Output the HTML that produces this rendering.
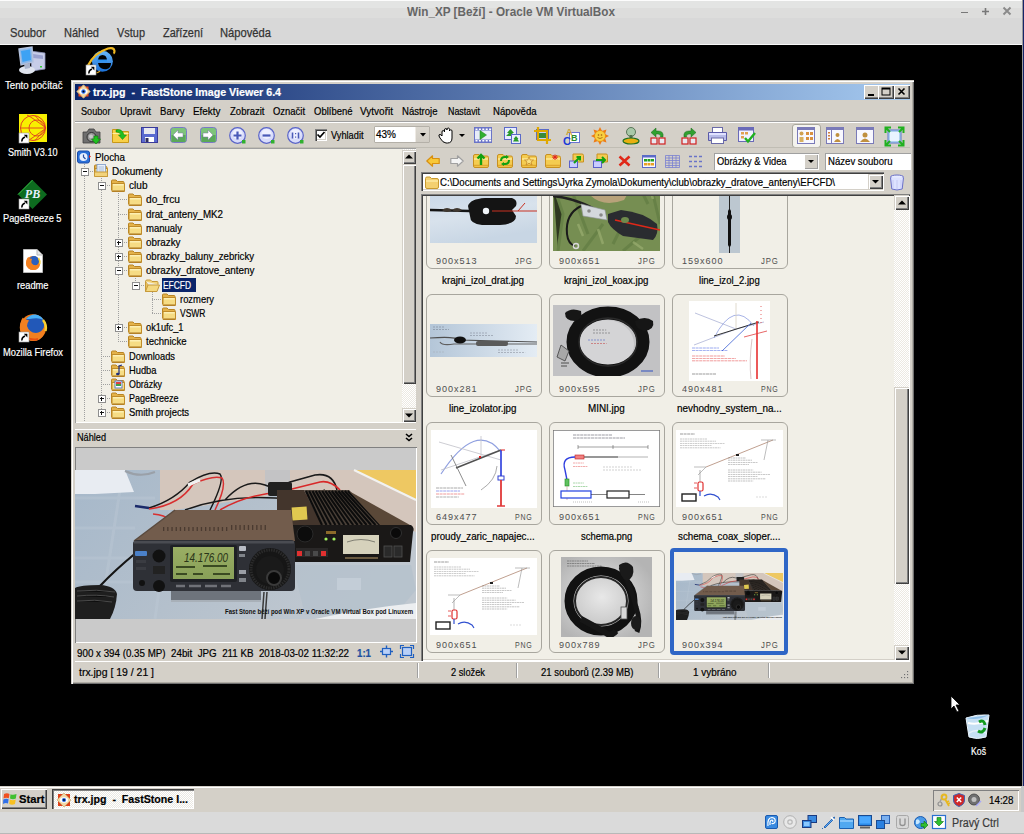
<!DOCTYPE html>
<html><head><meta charset="utf-8">
<style>
*{margin:0;padding:0;box-sizing:border-box}
html,body{width:1024px;height:834px;overflow:hidden;background:#000;font-family:"Liberation Sans",sans-serif;position:relative}
.a{position:absolute}
.t{position:absolute;white-space:nowrap;line-height:1;-webkit-text-stroke:0.2px currentColor}
.sx{transform-origin:0 50%}
svg{position:absolute;overflow:visible}
#vbtop{left:0;top:0;width:1024px;height:45px;background:linear-gradient(#fcfcfc 0,#fcfcfc 1px,#e3e4e3 1.5px,#e3e4e3 7.5px,#dddddc 8px,#dddddc 17.5px,#d8d8d8 18px,#d8d8d8 44px,#f8f8f8 44px)}
#vbtitle{left:0;width:1024px;top:5px;text-align:center;font-weight:bold;font-size:13px;color:#636363}
.vbm{top:27px;font-size:12.5px;color:#3a3a3a}
.desk{color:#fff;font-size:11px;text-shadow:1px 1px 0 #000}
.tbtn{position:absolute;width:16px;height:14px;background:#d4d0c8;box-shadow:inset 1px 1px 0 #fff,inset -1px -1px 0 #404040,inset -2px -2px 0 #808080}
.menu{top:104px;font-size:11px;color:#000}
.panel{background:#f1efe7}
.tree{font-size:11px;color:#000;top:0}
.card{position:absolute;width:116px;height:103px;border:1px solid #9e9c96;border-radius:7px}
.dim{position:absolute;font-size:10.5px;color:#555;letter-spacing:0.6px}
.fname{position:absolute;font-size:11px;color:#000}
.sbtn{position:absolute;background:#d4d0c8;box-shadow:inset 1px 1px 0 #d4d0c8,inset 2px 2px 0 #fff,inset -1px -1px 0 #404040,inset -2px -2px 0 #808080}
.track{position:absolute;background-color:#ece9e2;background-image:linear-gradient(45deg,#fff 25%,transparent 25%,transparent 75%,#fff 75%),linear-gradient(45deg,#fff 25%,transparent 25%,transparent 75%,#fff 75%);background-size:2px 2px;background-position:0 0,1px 1px;opacity:1}
.field{position:absolute;background:#fff;box-shadow:inset 1px 1px 0 #808080,inset 2px 2px 0 #404040,inset -1px -1px 0 #fff,inset -2px -2px 0 #d4d0c8}
</style></head><body>

<div id="vbtop" class="a"></div>
<div class="t sx" style="left:407.00px;top:5.20px;font-size:13px;color:#666;transform:scaleX(0.9021);-webkit-text-stroke:0;font-weight:bold;">Win_XP [Beží] - Oracle VM VirtualBox</div>
<div class="a" style="left:961px;top:11.5px;width:7px;height:1.7px;background:#787878"></div>
<svg style="left:982px;top:8px;" width="7" height="7" viewBox="0 0 7 7"><path d="M3.5 0V7M0 3.5H7" stroke="#787878" stroke-width="1.6"/></svg>
<svg style="left:1003px;top:7px;" width="8" height="8" viewBox="0 0 8 8"><path d="M0.5 0.5L7.5 7.5M7.5 0.5L0.5 7.5" stroke="#8a8a8a" stroke-width="1.9"/></svg>
<div class="a" style="left:1022px;top:0px;width:1px;height:834px;background:#9a9a9a"></div>
<div class="a" style="left:1023px;top:0px;width:1px;height:834px;background:#14246a"></div>
<div class="t sx" style="left:10.00px;top:26.92px;font-size:12.5px;color:#333;transform:scaleX(0.8932);-webkit-text-stroke:0.25px #333;">Soubor</div>
<div class="t sx" style="left:64.00px;top:26.92px;font-size:12.5px;color:#333;transform:scaleX(0.8836);-webkit-text-stroke:0.25px #333;">Náhled</div>
<div class="t sx" style="left:117.00px;top:26.92px;font-size:12.5px;color:#333;transform:scaleX(0.8760);-webkit-text-stroke:0.25px #333;">Vstup</div>
<div class="t sx" style="left:163.00px;top:26.92px;font-size:12.5px;color:#333;transform:scaleX(0.8725);-webkit-text-stroke:0.25px #333;">Zařízení</div>
<div class="t sx" style="left:220.00px;top:26.92px;font-size:12.5px;color:#333;transform:scaleX(0.8950);-webkit-text-stroke:0.25px #333;">Nápověda</div>
<svg style="left:18px;top:47px;" width="29" height="28" viewBox="0 0 29 28"><path d="M12 4L27 6L27 22L14 24Z" fill="#c7cde8" stroke="#8d93b8" stroke-width="0.8"/><path d="M15 7L25 8.5L25 12L15 11Z" fill="#9aa2cf"/><rect x="22" y="19" width="2" height="1.5" fill="#3c3"/><path d="M1 2L14 0L15 15L3 18Z" fill="#8ab6e8" stroke="#b4c2dc" stroke-width="1.4"/><path d="M3 4L12 2.5L13 13L4.5 15Z" fill="#3da2f4"/><ellipse cx="9" cy="23" rx="8" ry="4" fill="#dfe4ee"/><path d="M6 17L12 16L12 21L7 22Z" fill="#aab4cc"/></svg>
<div class="t sx" style="left:4.50px;top:80.19px;font-size:11px;color:#fff;transform:scaleX(0.8789);">Tento počítač</div>
<svg style="left:86px;top:47px;" width="30" height="28" viewBox="0 0 30 28"><defs><linearGradient id="ieg" x1="0" y1="0" x2="0" y2="1"><stop offset="0" stop-color="#6ab8f8"/><stop offset="1" stop-color="#1a70d8"/></linearGradient></defs><circle cx="16.4" cy="14.3" r="10.5" fill="url(#ieg)"/><path d="M12 14H21Q21 8 16.5 8Q12 8 12 14Z" fill="#000"/><path d="M12 16H25Q25 21 21 22Q16 23 13 19Z" fill="#000"/><path d="M11 13.5H21" stroke="#2a90f0" stroke-width="2"/><path d="M2 18.5Q8 6 22 1.5Q28 0 28.5 4Q28.5 6 27.5 6.5" fill="none" stroke="#f0b820" stroke-width="2.2"/><path d="M10.5 26Q13 25 14 24" stroke="#d8a020" stroke-width="1.2" fill="none"/></svg>
<svg style="left:86px;top:65px;" width="10" height="10" viewBox="0 0 10 10"><rect x="0" y="0" width="10" height="10" fill="#fff" stroke="#999" stroke-width="0.6"/><path d="M3 8.5Q2.5 5.5 6 4" fill="none" stroke="#000" stroke-width="1.6"/><path d="M4.8 1.8H8.4V5.4Z" fill="#000"/></svg>
<svg style="left:19px;top:114px;" width="28" height="28" viewBox="0 0 28 28"><rect x="0" y="0" width="28" height="28" fill="#f8f000"/><circle cx="14" cy="14" r="12.5" fill="none" stroke="#e04020" stroke-width="1"/><circle cx="18" cy="14" r="8" fill="none" stroke="#e04020" stroke-width="0.9"/><path d="M1.5 14H27M27 14Q14 4 8 1M27 14Q14 24 8 27M27 14Q20 6 16 1.5M27 14Q20 22 16 26.5" fill="none" stroke="#e04020" stroke-width="0.9"/></svg>
<svg style="left:19px;top:133px;" width="10" height="10" viewBox="0 0 10 10"><rect x="0" y="0" width="10" height="10" fill="#fff" stroke="#999" stroke-width="0.6"/><path d="M3 8.5Q2.5 5.5 6 4" fill="none" stroke="#000" stroke-width="1.6"/><path d="M4.8 1.8H8.4V5.4Z" fill="#000"/></svg>
<div class="t sx" style="left:8.00px;top:146.69px;font-size:11px;color:#fff;transform:scaleX(0.8261);">Smith V3.10</div>
<svg style="left:18px;top:180px;" width="29" height="29" viewBox="0 0 29 29"><path d="M14.5 0L29 14.5L14.5 29L0 14.5Z" fill="#0d6b1f"/><path d="M14.5 0L0 14.5" stroke="#3ad04a" stroke-width="1"/><text x="14.5" y="18" font-family="Liberation Serif" font-style="italic" font-weight="bold" font-size="12" fill="#e8f0ff" text-anchor="middle">PB</text></svg>
<svg style="left:19px;top:199px;" width="10" height="10" viewBox="0 0 10 10"><rect x="0" y="0" width="10" height="10" fill="#fff" stroke="#999" stroke-width="0.6"/><path d="M3 8.5Q2.5 5.5 6 4" fill="none" stroke="#000" stroke-width="1.6"/><path d="M4.8 1.8H8.4V5.4Z" fill="#000"/></svg>
<div class="t sx" style="left:3.00px;top:213.19px;font-size:11px;color:#fff;transform:scaleX(0.8392);">PageBreeze 5</div>
<svg style="left:23px;top:249px;" width="20" height="24" viewBox="0 0 20 24"><path d="M0.5 0.5H14L19.5 6V23.5H0.5Z" fill="#fff" stroke="#b8b8b8" stroke-width="1"/><path d="M14 0.5V6H19.5" fill="#e8e8e8" stroke="#b8b8b8"/><circle cx="10" cy="14" r="7" fill="#f07a1a"/><circle cx="11" cy="12" r="5" fill="#2a60c0"/><path d="M3 14Q3.5 9 5.5 8L6.5 10Q8 9 9 10Q8 12 8.5 14Q10 16.5 13 16.3Q15.5 16 16.5 13.5Q17.5 18.5 13.5 20.5Q9 22 5.5 19.5Q3 17 3 14Z" fill="#f28020"/><path d="M15.5 9Q17.5 12 16.8 15" stroke="#f8d030" stroke-width="1.5" fill="none"/></svg>
<div class="t sx" style="left:16.50px;top:280.19px;font-size:11px;color:#fff;transform:scaleX(0.8447);">readme</div>
<svg style="left:19px;top:314px;" width="28" height="28" viewBox="0 0 28 28"><circle cx="14" cy="13.5" r="13.2" fill="#f07a1a"/><circle cx="15.5" cy="10.5" r="9.8" fill="#2258b8"/><path d="M7 5Q11 0.5 16 0.5Q22 1 24.5 6Q20 3.5 14 4.5Q10 5 7 5Z" fill="#48b0f8"/><path d="M1 13Q1.5 6 4 3.5L5.5 6.5Q7.5 5 10 6.5Q8 9 8 12Q10 18.5 17 19Q22 18.5 25 14Q26.5 22 20.5 25.5Q14.5 28.5 8.5 25.5Q1 21 1 13Z" fill="#f28020"/><path d="M24 6Q28 11 26.5 17" stroke="#f8d030" stroke-width="2.5" fill="none"/><path d="M6 22Q12 27 19 25" stroke="#e85010" stroke-width="2" fill="none"/></svg>
<svg style="left:19px;top:332px;" width="10" height="10" viewBox="0 0 10 10"><rect x="0" y="0" width="10" height="10" fill="#fff" stroke="#999" stroke-width="0.6"/><path d="M3 8.5Q2.5 5.5 6 4" fill="none" stroke="#000" stroke-width="1.6"/><path d="M4.8 1.8H8.4V5.4Z" fill="#000"/></svg>
<div class="t sx" style="left:2.50px;top:346.69px;font-size:11px;color:#fff;transform:scaleX(0.8463);">Mozilla Firefox</div>
<svg style="left:965px;top:713px;" width="25" height="26" viewBox="0 0 25 26"><path d="M1 5Q12 1 24 2L21 24Q12 27 4 24Z" fill="#c6e0f4" stroke="#eaf4fc" stroke-width="1"/><path d="M1 5Q12 8 24 2Q13 4 1 5Z" fill="#8fc0ea"/><path d="M3 10Q12 12 23 8" stroke="#fff" stroke-width="2" fill="none"/><path d="M4 20Q12 15 21 20" stroke="#e4f0fa" stroke-width="1.5" fill="none"/><path d="M14 9Q19 6 20 12M13 18Q18 21 20 15" stroke="#129a20" stroke-width="3" fill="none"/></svg>
<div class="t sx" style="left:970.50px;top:745.69px;font-size:11px;color:#fff;transform:scaleX(0.7914);">Koš</div>
<svg style="left:950px;top:695px;" width="12" height="19" viewBox="0 0 12 19"><path d="M1 1V14L4 11L7 17L9 16L6 10H10Z" fill="#fff" stroke="#000" stroke-width="0.8"/></svg>
<div class="a" style="left:71px;top:80px;width:843px;height:604px;background:#d4d0c8;box-shadow:inset 1px 1px 0 #d4d0c8,inset 2px 2px 0 #fff,inset -1px -1px 0 #707070,inset -2px -2px 0 #b0aca4"></div>
<div class="a" style="left:75px;top:84px;width:835px;height:16px;background:linear-gradient(90deg,#0a246a,#a6caf0)"></div>
<svg style="left:76px;top:84px;" width="15" height="15" viewBox="0 0 15 15"><path d="M7.5 0.5L14.5 7.5L7.5 14.5L0.5 7.5Z" fill="#e8c890"/><rect x="2.5" y="2.5" width="10" height="10" fill="#f04818" transform="rotate(0)"/><path d="M7.5 1L14 7.5L7.5 14L1 7.5Z" fill="#f0d8a8" stroke="#c8a060" stroke-width="0.6"/><ellipse cx="7.5" cy="7.5" rx="4" ry="2.8" fill="#fff"/><circle cx="7.5" cy="7.5" r="2.2" fill="#2a6ae8"/><circle cx="7.5" cy="7.5" r="1" fill="#000"/></svg>
<div class="t sx" style="left:92.50px;top:86.69px;font-size:11px;color:#fff;transform:scaleX(0.9682);white-space:pre;font-weight:bold;">trx.jpg  -  FastStone Image Viewer 6.4</div>
<div class="tbtn" style="left:864px;top:85px"></div>
<div class="tbtn" style="left:878px;top:85px"></div>
<div class="tbtn" style="left:894px;top:85px"></div>
<div class="a" style="left:868px;top:94px;width:6px;height:2px;background:#000"></div>
<svg style="left:879px;top:86px;" width="14" height="12" viewBox="0 0 14 12"><rect x="3" y="2" width="8" height="7" fill="none" stroke="#000" stroke-width="1"/><rect x="3" y="2" width="8" height="1.5" fill="#000"/></svg>
<svg style="left:894px;top:85px;" width="16" height="14" viewBox="0 0 16 14"><path d="M4.5 3.5L10.5 9.5M10.5 3.5L4.5 9.5" stroke="#000" stroke-width="1.6"/></svg>
<div class="t sx" style="left:80.50px;top:106.19px;font-size:11px;color:#000;transform:scaleX(0.8317);">Soubor</div>
<div class="t sx" style="left:119.50px;top:106.19px;font-size:11px;color:#000;transform:scaleX(0.8898);">Upravit</div>
<div class="t sx" style="left:159.50px;top:106.19px;font-size:11px;color:#000;transform:scaleX(0.8714);">Barvy</div>
<div class="t sx" style="left:193.00px;top:106.19px;font-size:11px;color:#000;transform:scaleX(0.8997);">Efekty</div>
<div class="t sx" style="left:229.50px;top:106.19px;font-size:11px;color:#000;transform:scaleX(0.8683);">Zobrazit</div>
<div class="t sx" style="left:273.00px;top:106.19px;font-size:11px;color:#000;transform:scaleX(0.8581);">Označit</div>
<div class="t sx" style="left:313.50px;top:106.19px;font-size:11px;color:#000;transform:scaleX(0.8624);">Oblíbené</div>
<div class="t sx" style="left:359.50px;top:106.19px;font-size:11px;color:#000;transform:scaleX(0.9100);">Vytvořit</div>
<div class="t sx" style="left:402.00px;top:106.19px;font-size:11px;color:#000;transform:scaleX(0.8667);">Nástroje</div>
<div class="t sx" style="left:448.00px;top:106.19px;font-size:11px;color:#000;transform:scaleX(0.8054);">Nastavit</div>
<div class="t sx" style="left:492.50px;top:106.19px;font-size:11px;color:#000;transform:scaleX(0.8675);">Nápověda</div>
<div class="a" style="left:75px;top:121px;width:835px;height:1px;background:#a0a0a0"></div>
<div class="a" style="left:75px;top:122px;width:835px;height:1px;background:#fff"></div>
<svg style="left:81.5px;top:126.5px;" width="19" height="18" viewBox="0 0 19 18"><path d="M1 5H5L7 2H12L14 5H18V16H1Z" fill="#6e6e6e" stroke="#404040" stroke-width="0.8"/><circle cx="9.5" cy="10" r="4.5" fill="#9a9a9a" stroke="#303030" stroke-width="1"/><circle cx="9" cy="9.5" r="2" fill="#c8c8c8"/><path d="M12 9H16V12H18.5L14 17L9.5 12H12Z" fill="#20c020" stroke="#0a7a0a" stroke-width="0.6"/></svg>
<svg style="left:111.5px;top:127px;" width="17" height="16" viewBox="0 0 17 16"><path d="M0.5 2.5H6L7.5 4.5H16.5V15.5H0.5Z" fill="#f8d048" stroke="#c89818" stroke-width="1"/><path d="M0.5 6.5H16.5" stroke="#fff0a0"/><path d="M4 3Q10 1 12 8H14.5L10.5 12.5L6.5 8H9Q8 5 4 5Z" fill="#20c020" stroke="#0a800a" stroke-width="0.5"/></svg>
<svg style="left:140.5px;top:127px;" width="17" height="16" viewBox="0 0 17 16"><rect x="0.5" y="0.5" width="16" height="15" fill="#5a6ad0" stroke="#3a3a9a"/><rect x="3" y="1" width="11" height="6" fill="#e8e8f0"/><rect x="4" y="10" width="9" height="5" fill="#fff"/><rect x="4.5" y="11" width="3" height="4" fill="#303060"/></svg>
<svg style="left:170px;top:127px;" width="17" height="16" viewBox="0 0 17 16"><rect x="0.5" y="0.5" width="16" height="15" rx="3" fill="#7ec47a" stroke="#7a78c8"/><rect x="1.5" y="8" width="14" height="7" fill="#5aa85a"/><path d="M3 8L8 3V6H13V10H8V13Z" fill="#fff" stroke="#7a7aa0" stroke-width="0.5"/></svg>
<svg style="left:199.5px;top:127px;" width="17" height="16" viewBox="0 0 17 16"><rect x="0.5" y="0.5" width="16" height="15" rx="3" fill="#7ec47a" stroke="#7a78c8"/><rect x="1.5" y="8" width="14" height="7" fill="#5aa85a"/><path d="M13 8L8 3V6H3V10H8V13Z" fill="#fff" stroke="#7a7aa0" stroke-width="0.5"/></svg>
<svg style="left:228.5px;top:126.5px;" width="17" height="17" viewBox="0 0 17 17"><circle cx="8.5" cy="8.5" r="7.8" fill="#d8dcfa" stroke="#5a64c8" stroke-width="1.2"/><circle cx="8.5" cy="7" r="5" fill="#eef0ff"/><path d="M8.5 4.5V12.5M4.5 8.5H12.5" stroke="#4a5ab8" stroke-width="2.2"/><rect x="13" y="13" width="3.5" height="3.5" fill="#30b030"/></svg>
<svg style="left:258px;top:126.5px;" width="17" height="17" viewBox="0 0 17 17"><circle cx="8.5" cy="8.5" r="7.8" fill="#d8dcfa" stroke="#5a64c8" stroke-width="1.2"/><circle cx="8.5" cy="7" r="5" fill="#eef0ff"/><path d="M4.5 8.5H12.5" stroke="#4a5ab8" stroke-width="2.2"/><rect x="13" y="13" width="3.5" height="3.5" fill="#30b030"/></svg>
<svg style="left:287px;top:126.5px;" width="17" height="17" viewBox="0 0 17 17"><circle cx="8.5" cy="8.5" r="7.8" fill="#d8dcfa" stroke="#5a64c8" stroke-width="1.2"/><circle cx="8.5" cy="7" r="5" fill="#eef0ff"/><path d="M5.5 5.5V11.5M11.5 5.5V11.5" stroke="#4a5ab8" stroke-width="1.6"/><rect x="8" y="6" width="1.2" height="1.2" fill="#4a5ab8"/><rect x="8" y="9.5" width="1.2" height="1.2" fill="#4a5ab8"/><rect x="13" y="13" width="3.5" height="3.5" fill="#30b030"/></svg>
<div class="a" style="left:315px;top:129px;width:12px;height:12px;background:#fff;box-shadow:inset 1px 1px 0 #808080,inset 2px 2px 0 #404040,inset -1px -1px 0 #fff,inset -2px -2px 0 #d4d0c8"></div>
<svg style="left:317px;top:131px;" width="8" height="8" viewBox="0 0 8 8"><path d="M0.5 3.5L3 6L7.5 1" fill="none" stroke="#000" stroke-width="1.7"/></svg>
<div class="t sx" style="left:331.00px;top:129.69px;font-size:11px;color:#000;transform:scaleX(0.8392);">Vyhladit</div>
<div class="a" style="left:374px;top:126px;width:56px;height:17px;background:#fff;border:1px solid #b4b0a8;border-radius:1px"></div>
<div class="a" style="left:415px;top:127px;width:14px;height:15px;background:linear-gradient(#dcd8d0,#d0ccc4);border-left:1px solid #eeeae4"></div>
<div class="t sx" style="left:376.00px;top:128.69px;font-size:11px;color:#000;transform:scaleX(0.9085);">43%</div>
<svg style="left:419.5px;top:133px;" width="6" height="3.5" viewBox="0 0 6 3.5"><path d="M0 0H6L3 3.5Z" fill="#000"/></svg>
<svg style="left:438px;top:127px;" width="18" height="17" viewBox="0 0 18 17"><path d="M4 9V5Q4 3.5 5.3 3.5Q6.5 3.5 6.5 5V3Q6.5 1.5 7.8 1.5Q9 1.5 9 3V2.5Q9 1 10.3 1Q11.5 1 11.5 2.5V4Q11.5 2.8 12.7 2.8Q14 2.8 14 4V11Q14 16 9.5 16H8Q5 16 2 11L1 9Q0.5 7.5 2 7.5Q3 7.5 4 9Z" fill="#fff" stroke="#000" stroke-width="1"/></svg>
<svg style="left:459px;top:134px;" width="6" height="3" viewBox="0 0 6 3"><path d="M0 0H6L3 3Z" fill="#000"/></svg>
<svg style="left:474px;top:127px;" width="18" height="16" viewBox="0 0 18 16"><rect x="0.5" y="0.5" width="17" height="15" fill="#e8ecf8" stroke="#6a74c8"/><rect x="1" y="1" width="16" height="2.5" fill="#6a74c8"/><rect x="1" y="12.5" width="16" height="2.5" fill="#6a74c8"/><rect x="1.5" y="1.5" width="2" height="1.5" fill="#fff"/><rect x="1.5" y="13" width="2" height="1.5" fill="#fff"/><rect x="4.9" y="1.5" width="2" height="1.5" fill="#fff"/><rect x="4.9" y="13" width="2" height="1.5" fill="#fff"/><rect x="8.3" y="1.5" width="2" height="1.5" fill="#fff"/><rect x="8.3" y="13" width="2" height="1.5" fill="#fff"/><rect x="11.7" y="1.5" width="2" height="1.5" fill="#fff"/><rect x="11.7" y="13" width="2" height="1.5" fill="#fff"/><rect x="15.1" y="1.5" width="2" height="1.5" fill="#fff"/><rect x="15.1" y="13" width="2" height="1.5" fill="#fff"/><path d="M6 3.5L12.5 8L6 12.5Z" fill="#30b030" stroke="#208020" stroke-width="0.5"/></svg>
<svg style="left:504px;top:127px;" width="17" height="17" viewBox="0 0 17 17"><rect x="0.5" y="0.5" width="12" height="12" fill="#e8ecff" stroke="#5a6ac8"/><path d="M6.5 2L10 6H8L11 9H2L5 6H3Z" fill="#2a9a2a"/><rect x="7.5" y="7.5" width="9" height="9" fill="#e8ecff" stroke="#5a6ac8"/><path d="M12 9L14.5 12H13.5L15 14.5H9L10.5 12H9.5Z" fill="#2a9a2a"/></svg>
<svg style="left:533.5px;top:127px;" width="17" height="17" viewBox="0 0 17 17"><rect x="2.5" y="2.5" width="12" height="10" fill="#c8d0f8" stroke="#5a6ac8"/><path d="M4 0V13H17M0 4H13V17" fill="none" stroke="#e0a800" stroke-width="2.2"/><rect x="5" y="6" width="7" height="5" fill="#3a8a3a"/></svg>
<svg style="left:563px;top:126.5px;" width="17" height="18" viewBox="0 0 17 18"><rect x="6.5" y="5.5" width="10" height="10" fill="#fff" stroke="#6a74d0"/><text x="3" y="8" font-family="Liberation Sans" font-weight="bold" font-size="9" fill="#c8a030">A</text><text x="0" y="17.5" font-family="Liberation Sans" font-weight="bold" font-size="11" fill="#1a3ad8">C</text><text x="8" y="14" font-family="Liberation Sans" font-weight="bold" font-size="9" fill="#2a8a2a">B</text></svg>
<svg style="left:591px;top:126.5px;" width="18" height="18" viewBox="0 0 18 18"><path d="M9 0L11 4L15.5 2.5L14 7L18 9L14 11L15.5 15.5L11 14L9 18L7 14L2.5 15.5L4 11L0 9L4 7L2.5 2.5L7 4Z" fill="#f07a10"/><circle cx="9" cy="9" r="5.5" fill="#f8d040" stroke="#e08010" stroke-width="0.6"/><circle cx="7.5" cy="8" r="0.8" fill="#a06010"/><circle cx="10.5" cy="8" r="0.8" fill="#a06010"/><path d="M6.5 10.5Q9 12.5 11.5 10.5" stroke="#a06010" stroke-width="0.8" fill="none"/></svg>
<svg style="left:621.5px;top:126.5px;" width="18" height="18" viewBox="0 0 18 18"><circle cx="9" cy="5" r="4.5" fill="#a8c8a8" stroke="#406040" stroke-width="0.8"/><rect x="7.5" y="8" width="3" height="4" fill="#507050"/><ellipse cx="9" cy="14" rx="8" ry="3" fill="#e8b010" stroke="#207020" stroke-width="1.2"/></svg>
<svg style="left:649.5px;top:126.5px;" width="18" height="18" viewBox="0 0 18 18"><path d="M13 10Q14 4 8 4H6V1L1 5.5L6 10V7H8Q11 7 10.5 10Z" fill="#30a030" stroke="#1a6a1a" stroke-width="0.5"/><rect x="1" y="11" width="6" height="6" fill="#e8e8f0" stroke="#d02020" stroke-width="1.2"/><rect x="9" y="11" width="6" height="6" fill="#e8e8f0" stroke="#d02020" stroke-width="1.2"/></svg>
<svg style="left:679px;top:126.5px;" width="18" height="18" viewBox="0 0 18 18"><path d="M5 10Q4 4 10 4H12V1L17 5.5L12 10V7H10Q7 7 7.5 10Z" fill="#30a030" stroke="#1a6a1a" stroke-width="0.5"/><rect x="3" y="11" width="6" height="6" fill="#e8e8f0" stroke="#d02020" stroke-width="1.2"/><rect x="11" y="11" width="6" height="6" fill="#e8e8f0" stroke="#d02020" stroke-width="1.2"/></svg>
<svg style="left:708px;top:127px;" width="19" height="17" viewBox="0 0 19 17"><rect x="4.5" y="0.5" width="10" height="6" fill="#fff" stroke="#6a6aa8"/><path d="M0.5 5.5H18.5V13.5H0.5Z" fill="#b8bce8" stroke="#5a5aa8"/><rect x="1" y="6" width="17" height="2" fill="#e0e2ff"/><rect x="3.5" y="11" width="12" height="5.5" fill="#fff" stroke="#6a6aa8"/></svg>
<svg style="left:737.5px;top:127px;" width="18" height="17" viewBox="0 0 18 17"><rect x="0.5" y="0.5" width="15" height="14" fill="#f0f0ff" stroke="#6a6ab8"/><rect x="0.5" y="0.5" width="15" height="3" fill="#6a6ab8"/><rect x="3" y="5" width="3" height="2.5" fill="#e0a050"/><rect x="7" y="5" width="3" height="2.5" fill="#e0a050"/><rect x="3" y="9" width="3" height="2.5" fill="#e0a050"/><path d="M7 11L10 14.5L17 6" fill="none" stroke="#20b020" stroke-width="2.4"/></svg>
<div class="a" style="left:791.5px;top:123.5px;width:29px;height:24px;background:#f4f3ee;border:1px solid #a8a69c;border-radius:3px"></div>
<svg style="left:797px;top:127px;" width="18" height="17" viewBox="0 0 18 17"><rect x="0.5" y="0.5" width="17" height="16" fill="#f8f8ff" stroke="#7a7ab8"/><rect x="0.5" y="0.5" width="17" height="2.5" fill="#7a7ab8"/><circle cx="4.5" cy="6.5" r="2" fill="#d0a050"/><rect x="2.5" y="10" width="4" height="5" fill="#d8b060"/><rect x="9" y="5" width="3" height="3" fill="#d89040"/><rect x="13" y="5" width="3" height="3" fill="#d89040"/><rect x="9" y="10" width="3" height="3" fill="#d89040"/><rect x="13" y="10" width="3" height="3" fill="#d89040"/></svg>
<svg style="left:826px;top:127px;" width="18" height="17" viewBox="0 0 18 17"><rect x="0.5" y="0.5" width="17" height="16" fill="#f8f8ff" stroke="#7a7ab8"/><rect x="0.5" y="0.5" width="17" height="2.5" fill="#7a7ab8"/><path d="M5.5 3V16.5" stroke="#7a7ab8"/><rect x="2" y="5" width="2" height="1.5" fill="#d08040"/><rect x="2" y="8" width="2" height="1.5" fill="#d08040"/><rect x="2" y="11" width="2" height="1.5" fill="#d08040"/><circle cx="11.5" cy="8" r="2" fill="#c09040"/><path d="M8 15Q11.5 9 15 15Z" fill="#c09040"/></svg>
<svg style="left:855.5px;top:127px;" width="18" height="17" viewBox="0 0 18 17"><rect x="0.5" y="0.5" width="17" height="16" fill="#f8f8ff" stroke="#7a7ab8"/><rect x="0.5" y="0.5" width="17" height="2.5" fill="#7a7ab8"/><circle cx="9" cy="8" r="2.5" fill="#c09040"/><path d="M4 15Q9 8 14 15Z" fill="#c09040"/></svg>
<svg style="left:884.5px;top:126.5px;" width="19" height="19" viewBox="0 0 19 19"><rect x="3" y="3" width="13" height="13" fill="#b0d0f0" stroke="#5a7ac8"/><rect x="5" y="5" width="9" height="9" fill="#e8f4ff"/><path d="M0.5 6V0.5H6M13 0.5H18.5V6M18.5 13V18.5H13M6 18.5H0.5V13M1 1L5 5M18 1L14 5M18 18L14 14M1 18L5 14" fill="none" stroke="#20b020" stroke-width="2"/></svg>
<div class="a" style="left:75px;top:147px;width:835px;height:1px;background:#c0bdb4"></div>
<div class="a" style="left:75px;top:148px;width:341px;height:275px;background:#f1efe7;box-shadow:inset 1px 1px 0 #a0a0a0,inset -1px -1px 0 #fff"></div>
<div class="a" style="left:76px;top:149px;width:325px;height:273px;overflow:hidden">
<div class="a" style="left:8px;top:15px;width:1px;height:259px;background-image:linear-gradient(#a0a0a0 50%,transparent 50%);background-size:1px 2px"></div>
<div class="a" style="left:25px;top:27px;width:1px;height:236px;background-image:linear-gradient(#a0a0a0 50%,transparent 50%);background-size:1px 2px"></div>
<div class="a" style="left:42px;top:42px;width:1px;height:151px;background-image:linear-gradient(#a0a0a0 50%,transparent 50%);background-size:1px 2px"></div>
<div class="a" style="left:59px;top:127px;width:1px;height:9px;background-image:linear-gradient(#a0a0a0 50%,transparent 50%);background-size:1px 2px"></div>
<div class="a" style="left:76px;top:141px;width:1px;height:23px;background-image:linear-gradient(#a0a0a0 50%,transparent 50%);background-size:1px 2px"></div>
<div class="a" style="left:8px;top:22px;width:10px;height:1px;background-image:linear-gradient(90deg,#a0a0a0 50%,transparent 50%);background-size:2px 1px"></div>
<div class="a" style="left:5px;top:19px;width:8px;height:8px;background:#fff;border:1px solid #8e8e8e"></div>
<div class="a" style="left:7px;top:22px;width:4px;height:1px;background:#111"></div>
<div class="a" style="left:25px;top:36px;width:10px;height:1px;background-image:linear-gradient(90deg,#a0a0a0 50%,transparent 50%);background-size:2px 1px"></div>
<div class="a" style="left:22px;top:33px;width:8px;height:8px;background:#fff;border:1px solid #8e8e8e"></div>
<div class="a" style="left:24px;top:36px;width:4px;height:1px;background:#111"></div>
<div class="a" style="left:42px;top:50px;width:10px;height:1px;background-image:linear-gradient(90deg,#a0a0a0 50%,transparent 50%);background-size:2px 1px"></div>
<div class="a" style="left:42px;top:65px;width:10px;height:1px;background-image:linear-gradient(90deg,#a0a0a0 50%,transparent 50%);background-size:2px 1px"></div>
<div class="a" style="left:42px;top:79px;width:10px;height:1px;background-image:linear-gradient(90deg,#a0a0a0 50%,transparent 50%);background-size:2px 1px"></div>
<div class="a" style="left:42px;top:93px;width:10px;height:1px;background-image:linear-gradient(90deg,#a0a0a0 50%,transparent 50%);background-size:2px 1px"></div>
<div class="a" style="left:39px;top:90px;width:8px;height:8px;background:#fff;border:1px solid #8e8e8e"></div>
<div class="a" style="left:41px;top:93px;width:4px;height:1px;background:#111"></div>
<div class="a" style="left:42px;top:92px;width:1px;height:4px;background:#111"></div>
<div class="a" style="left:42px;top:107px;width:10px;height:1px;background-image:linear-gradient(90deg,#a0a0a0 50%,transparent 50%);background-size:2px 1px"></div>
<div class="a" style="left:39px;top:104px;width:8px;height:8px;background:#fff;border:1px solid #8e8e8e"></div>
<div class="a" style="left:41px;top:107px;width:4px;height:1px;background:#111"></div>
<div class="a" style="left:42px;top:106px;width:1px;height:4px;background:#111"></div>
<div class="a" style="left:42px;top:121px;width:10px;height:1px;background-image:linear-gradient(90deg,#a0a0a0 50%,transparent 50%);background-size:2px 1px"></div>
<div class="a" style="left:39px;top:118px;width:8px;height:8px;background:#fff;border:1px solid #8e8e8e"></div>
<div class="a" style="left:41px;top:121px;width:4px;height:1px;background:#111"></div>
<div class="a" style="left:59px;top:136px;width:10px;height:1px;background-image:linear-gradient(90deg,#a0a0a0 50%,transparent 50%);background-size:2px 1px"></div>
<div class="a" style="left:56px;top:133px;width:8px;height:8px;background:#fff;border:1px solid #8e8e8e"></div>
<div class="a" style="left:58px;top:136px;width:4px;height:1px;background:#111"></div>
<div class="a" style="left:76px;top:150px;width:10px;height:1px;background-image:linear-gradient(90deg,#a0a0a0 50%,transparent 50%);background-size:2px 1px"></div>
<div class="a" style="left:76px;top:164px;width:10px;height:1px;background-image:linear-gradient(90deg,#a0a0a0 50%,transparent 50%);background-size:2px 1px"></div>
<div class="a" style="left:42px;top:178px;width:10px;height:1px;background-image:linear-gradient(90deg,#a0a0a0 50%,transparent 50%);background-size:2px 1px"></div>
<div class="a" style="left:39px;top:175px;width:8px;height:8px;background:#fff;border:1px solid #8e8e8e"></div>
<div class="a" style="left:41px;top:178px;width:4px;height:1px;background:#111"></div>
<div class="a" style="left:42px;top:177px;width:1px;height:4px;background:#111"></div>
<div class="a" style="left:42px;top:192px;width:10px;height:1px;background-image:linear-gradient(90deg,#a0a0a0 50%,transparent 50%);background-size:2px 1px"></div>
<div class="a" style="left:25px;top:207px;width:10px;height:1px;background-image:linear-gradient(90deg,#a0a0a0 50%,transparent 50%);background-size:2px 1px"></div>
<div class="a" style="left:25px;top:221px;width:10px;height:1px;background-image:linear-gradient(90deg,#a0a0a0 50%,transparent 50%);background-size:2px 1px"></div>
<div class="a" style="left:25px;top:235px;width:10px;height:1px;background-image:linear-gradient(90deg,#a0a0a0 50%,transparent 50%);background-size:2px 1px"></div>
<div class="a" style="left:25px;top:249px;width:10px;height:1px;background-image:linear-gradient(90deg,#a0a0a0 50%,transparent 50%);background-size:2px 1px"></div>
<div class="a" style="left:22px;top:246px;width:8px;height:8px;background:#fff;border:1px solid #8e8e8e"></div>
<div class="a" style="left:24px;top:249px;width:4px;height:1px;background:#111"></div>
<div class="a" style="left:25px;top:248px;width:1px;height:4px;background:#111"></div>
<div class="a" style="left:25px;top:263px;width:10px;height:1px;background-image:linear-gradient(90deg,#a0a0a0 50%,transparent 50%);background-size:2px 1px"></div>
<div class="a" style="left:22px;top:260px;width:8px;height:8px;background:#fff;border:1px solid #8e8e8e"></div>
<div class="a" style="left:24px;top:263px;width:4px;height:1px;background:#111"></div>
<div class="a" style="left:25px;top:262px;width:1px;height:4px;background:#111"></div>
</div>
<svg style="left:77px;top:150.2px;" width="14" height="14" viewBox="0 0 14 14"><rect x="0.5" y="1" width="12" height="12" rx="2" fill="#2a70d8" stroke="#1a4aa8"/><circle cx="6.5" cy="7" r="4" fill="#e8f0ff"/><path d="M6.5 4.5V7L8.5 9" stroke="#2a50a0" stroke-width="1.2" fill="none"/><path d="M12 5L14 6.5L12 8Z" fill="#e02020"/></svg>
<div class="t sx" style="left:95.00px;top:151.89px;font-size:11px;color:#000;transform:scaleX(0.8920);">Plocha</div>
<svg style="left:94px;top:164.39999999999998px;" width="14" height="14" viewBox="0 0 14 14"><path d="M0.5 2Q0.5 1 1.5 1H5L6.5 2.5H12Q13 2.5 13 3.5V11H0.5Z" fill="#e4b24a" stroke="#b88424" stroke-width="1"/><path d="M1 4.5H13.5V12.5H1Z" fill="#f6dc84" stroke="#c08c2a" stroke-width="1"/><path d="M2 5.8H12.5" stroke="#fff4c0" stroke-width="1.2"/><path d="M1.5 12H13" stroke="#a87420" stroke-width="1"/><rect x="3" y="0.5" width="8.5" height="9" fill="#e8f0fa" stroke="#7a9ac8" stroke-width="0.8"/><path d="M4.5 3H10M4.5 5H10M4.5 7H10" stroke="#7a9ac8" stroke-width="0.6"/><path d="M0.5 8H13.5V12.5H0.5Z" fill="#f2d37a" stroke="#c79a3a"/></svg>
<div class="t sx" style="left:112.00px;top:166.09px;font-size:11px;color:#000;transform:scaleX(0.9078);">Dokumenty</div>
<svg style="left:111px;top:179.1px;" width="14" height="13" viewBox="0 0 14 13"><path d="M0.5 2Q0.5 1 1.5 1H5L6.5 2.5H12Q13 2.5 13 3.5V11H0.5Z" fill="#e4b24a" stroke="#b88424" stroke-width="1"/><path d="M1 4.5H13.5V12.5H1Z" fill="#f6dc84" stroke="#c08c2a" stroke-width="1"/><path d="M2 5.8H12.5" stroke="#fff4c0" stroke-width="1.2"/><path d="M1.5 12H13" stroke="#a87420" stroke-width="1"/></svg>
<div class="t sx" style="left:129.00px;top:180.29px;font-size:11px;color:#000;transform:scaleX(0.9168);">club</div>
<svg style="left:128px;top:193.29999999999998px;" width="14" height="13" viewBox="0 0 14 13"><path d="M0.5 2Q0.5 1 1.5 1H5L6.5 2.5H12Q13 2.5 13 3.5V11H0.5Z" fill="#e4b24a" stroke="#b88424" stroke-width="1"/><path d="M1 4.5H13.5V12.5H1Z" fill="#f6dc84" stroke="#c08c2a" stroke-width="1"/><path d="M2 5.8H12.5" stroke="#fff4c0" stroke-width="1.2"/><path d="M1.5 12H13" stroke="#a87420" stroke-width="1"/></svg>
<div class="t sx" style="left:146.00px;top:194.49px;font-size:11px;color:#000;transform:scaleX(0.9268);">do_frcu</div>
<svg style="left:128px;top:207.5px;" width="14" height="13" viewBox="0 0 14 13"><path d="M0.5 2Q0.5 1 1.5 1H5L6.5 2.5H12Q13 2.5 13 3.5V11H0.5Z" fill="#e4b24a" stroke="#b88424" stroke-width="1"/><path d="M1 4.5H13.5V12.5H1Z" fill="#f6dc84" stroke="#c08c2a" stroke-width="1"/><path d="M2 5.8H12.5" stroke="#fff4c0" stroke-width="1.2"/><path d="M1.5 12H13" stroke="#a87420" stroke-width="1"/></svg>
<div class="t sx" style="left:146.00px;top:208.69px;font-size:11px;color:#000;transform:scaleX(0.8868);">drat_anteny_MK2</div>
<svg style="left:128px;top:221.7px;" width="14" height="13" viewBox="0 0 14 13"><path d="M0.5 2Q0.5 1 1.5 1H5L6.5 2.5H12Q13 2.5 13 3.5V11H0.5Z" fill="#e4b24a" stroke="#b88424" stroke-width="1"/><path d="M1 4.5H13.5V12.5H1Z" fill="#f6dc84" stroke="#c08c2a" stroke-width="1"/><path d="M2 5.8H12.5" stroke="#fff4c0" stroke-width="1.2"/><path d="M1.5 12H13" stroke="#a87420" stroke-width="1"/></svg>
<div class="t sx" style="left:146.00px;top:222.89px;font-size:11px;color:#000;transform:scaleX(0.8659);">manualy</div>
<svg style="left:128px;top:235.89999999999998px;" width="14" height="13" viewBox="0 0 14 13"><path d="M0.5 2Q0.5 1 1.5 1H5L6.5 2.5H12Q13 2.5 13 3.5V11H0.5Z" fill="#e4b24a" stroke="#b88424" stroke-width="1"/><path d="M1 4.5H13.5V12.5H1Z" fill="#f6dc84" stroke="#c08c2a" stroke-width="1"/><path d="M2 5.8H12.5" stroke="#fff4c0" stroke-width="1.2"/><path d="M1.5 12H13" stroke="#a87420" stroke-width="1"/></svg>
<div class="t sx" style="left:146.00px;top:237.09px;font-size:11px;color:#000;transform:scaleX(0.8958);">obrazky</div>
<svg style="left:128px;top:250.09999999999997px;" width="14" height="13" viewBox="0 0 14 13"><path d="M0.5 2Q0.5 1 1.5 1H5L6.5 2.5H12Q13 2.5 13 3.5V11H0.5Z" fill="#e4b24a" stroke="#b88424" stroke-width="1"/><path d="M1 4.5H13.5V12.5H1Z" fill="#f6dc84" stroke="#c08c2a" stroke-width="1"/><path d="M2 5.8H12.5" stroke="#fff4c0" stroke-width="1.2"/><path d="M1.5 12H13" stroke="#a87420" stroke-width="1"/></svg>
<div class="t sx" style="left:146.00px;top:251.29px;font-size:11px;color:#000;transform:scaleX(0.8745);">obrazky_baluny_zebricky</div>
<svg style="left:128px;top:264.29999999999995px;" width="14" height="13" viewBox="0 0 14 13"><path d="M0.5 2Q0.5 1 1.5 1H5L6.5 2.5H12Q13 2.5 13 3.5V11H0.5Z" fill="#e4b24a" stroke="#b88424" stroke-width="1"/><path d="M1 4.5H13.5V12.5H1Z" fill="#f6dc84" stroke="#c08c2a" stroke-width="1"/><path d="M2 5.8H12.5" stroke="#fff4c0" stroke-width="1.2"/><path d="M1.5 12H13" stroke="#a87420" stroke-width="1"/></svg>
<div class="t sx" style="left:146.00px;top:265.49px;font-size:11px;color:#000;transform:scaleX(0.9007);">obrazky_dratove_anteny</div>
<svg style="left:145px;top:278.5px;" width="15" height="14" viewBox="0 0 15 14"><path d="M0.5 2.5Q0.5 1 2 1H5.5L7 2.5H12Q13 2.5 13 3.5V5.5" fill="#f2d37a" stroke="#c79a3a" stroke-width="1"/><path d="M0.5 2.5V12.5H12L14.5 6H3Z" fill="#f4d880" stroke="#c79a3a" stroke-width="1"/><path d="M0.5 2.5V12.5L3 6" fill="#e8c060" stroke="#c79a3a"/></svg>
<div class="a" style="left:162px;top:278px;width:34px;height:14px;background:#0a246a"></div>
<div class="t sx" style="left:163.00px;top:279.69px;font-size:11px;color:#fff;transform:scaleX(0.7637);">EFCFD</div>
<svg style="left:162px;top:292.7px;" width="14" height="13" viewBox="0 0 14 13"><path d="M0.5 2Q0.5 1 1.5 1H5L6.5 2.5H12Q13 2.5 13 3.5V11H0.5Z" fill="#e4b24a" stroke="#b88424" stroke-width="1"/><path d="M1 4.5H13.5V12.5H1Z" fill="#f6dc84" stroke="#c08c2a" stroke-width="1"/><path d="M2 5.8H12.5" stroke="#fff4c0" stroke-width="1.2"/><path d="M1.5 12H13" stroke="#a87420" stroke-width="1"/></svg>
<div class="t sx" style="left:180.00px;top:293.89px;font-size:11px;color:#000;transform:scaleX(0.8559);">rozmery</div>
<svg style="left:162px;top:306.9px;" width="14" height="13" viewBox="0 0 14 13"><path d="M0.5 2Q0.5 1 1.5 1H5L6.5 2.5H12Q13 2.5 13 3.5V11H0.5Z" fill="#e4b24a" stroke="#b88424" stroke-width="1"/><path d="M1 4.5H13.5V12.5H1Z" fill="#f6dc84" stroke="#c08c2a" stroke-width="1"/><path d="M2 5.8H12.5" stroke="#fff4c0" stroke-width="1.2"/><path d="M1.5 12H13" stroke="#a87420" stroke-width="1"/></svg>
<div class="t sx" style="left:180.00px;top:308.09px;font-size:11px;color:#000;transform:scaleX(0.7727);">VSWR</div>
<svg style="left:128px;top:321.09999999999997px;" width="14" height="13" viewBox="0 0 14 13"><path d="M0.5 2Q0.5 1 1.5 1H5L6.5 2.5H12Q13 2.5 13 3.5V11H0.5Z" fill="#e4b24a" stroke="#b88424" stroke-width="1"/><path d="M1 4.5H13.5V12.5H1Z" fill="#f6dc84" stroke="#c08c2a" stroke-width="1"/><path d="M2 5.8H12.5" stroke="#fff4c0" stroke-width="1.2"/><path d="M1.5 12H13" stroke="#a87420" stroke-width="1"/></svg>
<div class="t sx" style="left:146.00px;top:322.29px;font-size:11px;color:#000;transform:scaleX(0.8400);">ok1ufc_1</div>
<svg style="left:128px;top:335.29999999999995px;" width="14" height="13" viewBox="0 0 14 13"><path d="M0.5 2Q0.5 1 1.5 1H5L6.5 2.5H12Q13 2.5 13 3.5V11H0.5Z" fill="#e4b24a" stroke="#b88424" stroke-width="1"/><path d="M1 4.5H13.5V12.5H1Z" fill="#f6dc84" stroke="#c08c2a" stroke-width="1"/><path d="M2 5.8H12.5" stroke="#fff4c0" stroke-width="1.2"/><path d="M1.5 12H13" stroke="#a87420" stroke-width="1"/></svg>
<div class="t sx" style="left:146.00px;top:336.49px;font-size:11px;color:#000;transform:scaleX(0.8716);">technicke</div>
<svg style="left:111px;top:349.5px;" width="14" height="13" viewBox="0 0 14 13"><path d="M0.5 2Q0.5 1 1.5 1H5L6.5 2.5H12Q13 2.5 13 3.5V11H0.5Z" fill="#e4b24a" stroke="#b88424" stroke-width="1"/><path d="M1 4.5H13.5V12.5H1Z" fill="#f6dc84" stroke="#c08c2a" stroke-width="1"/><path d="M2 5.8H12.5" stroke="#fff4c0" stroke-width="1.2"/><path d="M1.5 12H13" stroke="#a87420" stroke-width="1"/></svg>
<div class="t sx" style="left:129.00px;top:350.69px;font-size:11px;color:#000;transform:scaleX(0.8453);">Downloads</div>
<svg style="left:111px;top:363.7px;" width="14" height="13" viewBox="0 0 14 13"><path d="M0.5 2Q0.5 1 1.5 1H5L6.5 2.5H12Q13 2.5 13 3.5V11H0.5Z" fill="#e4b24a" stroke="#b88424" stroke-width="1"/><path d="M1 4.5H13.5V12.5H1Z" fill="#f6dc84" stroke="#c08c2a" stroke-width="1"/><path d="M2 5.8H12.5" stroke="#fff4c0" stroke-width="1.2"/><path d="M1.5 12H13" stroke="#a87420" stroke-width="1"/><path d="M8 10V2L11 1" stroke="#203080" stroke-width="1.2" fill="none"/><ellipse cx="6.8" cy="10" rx="1.8" ry="1.3" fill="#203080"/></svg>
<div class="t sx" style="left:129.00px;top:364.89px;font-size:11px;color:#000;transform:scaleX(0.8484);">Hudba</div>
<svg style="left:111px;top:377.9px;" width="14" height="13" viewBox="0 0 14 13"><path d="M0.5 2Q0.5 1 1.5 1H5L6.5 2.5H12Q13 2.5 13 3.5V11H0.5Z" fill="#e4b24a" stroke="#b88424" stroke-width="1"/><path d="M1 4.5H13.5V12.5H1Z" fill="#f6dc84" stroke="#c08c2a" stroke-width="1"/><path d="M2 5.8H12.5" stroke="#fff4c0" stroke-width="1.2"/><path d="M1.5 12H13" stroke="#a87420" stroke-width="1"/><rect x="4" y="3" width="7" height="7" fill="#fff" stroke="#5a7ac8"/><rect x="5" y="4" width="5" height="4" fill="#e04040"/><rect x="5" y="6" width="5" height="2" fill="#40a040"/></svg>
<div class="t sx" style="left:129.00px;top:379.09px;font-size:11px;color:#000;transform:scaleX(0.8058);">Obrázky</div>
<svg style="left:111px;top:392.09999999999997px;" width="14" height="13" viewBox="0 0 14 13"><path d="M0.5 2Q0.5 1 1.5 1H5L6.5 2.5H12Q13 2.5 13 3.5V11H0.5Z" fill="#e4b24a" stroke="#b88424" stroke-width="1"/><path d="M1 4.5H13.5V12.5H1Z" fill="#f6dc84" stroke="#c08c2a" stroke-width="1"/><path d="M2 5.8H12.5" stroke="#fff4c0" stroke-width="1.2"/><path d="M1.5 12H13" stroke="#a87420" stroke-width="1"/></svg>
<div class="t sx" style="left:129.00px;top:393.29px;font-size:11px;color:#000;transform:scaleX(0.8176);">PageBreeze</div>
<svg style="left:111px;top:406.29999999999995px;" width="14" height="13" viewBox="0 0 14 13"><path d="M0.5 2Q0.5 1 1.5 1H5L6.5 2.5H12Q13 2.5 13 3.5V11H0.5Z" fill="#e4b24a" stroke="#b88424" stroke-width="1"/><path d="M1 4.5H13.5V12.5H1Z" fill="#f6dc84" stroke="#c08c2a" stroke-width="1"/><path d="M2 5.8H12.5" stroke="#fff4c0" stroke-width="1.2"/><path d="M1.5 12H13" stroke="#a87420" stroke-width="1"/></svg>
<div class="t sx" style="left:129.00px;top:407.49px;font-size:11px;color:#000;transform:scaleX(0.8610);">Smith projects</div>
<div class="track" style="left:402px;top:149px;width:14px;height:273px"></div>
<div class="sbtn" style="left:402px;top:150px;width:14px;height:14px"></div>
<svg style="left:405px;top:154px;" width="8" height="5" viewBox="0 0 8 5"><path d="M0 4.5H8L4 0.5Z" fill="#000"/></svg>
<div class="sbtn" style="left:402px;top:164px;width:14px;height:220px"></div>
<div class="sbtn" style="left:402px;top:408px;width:14px;height:14px"></div>
<svg style="left:405px;top:413px;" width="8" height="5" viewBox="0 0 8 5"><path d="M0 0.5H8L4 4.5Z" fill="#000"/></svg>
<div class="a" style="left:75px;top:429px;width:341px;height:1px;background:#fff"></div>
<div class="t sx" style="left:77.00px;top:432.19px;font-size:11px;color:#000;transform:scaleX(0.8320);">Náhled</div>
<svg style="left:405px;top:433px;" width="8" height="9" viewBox="0 0 8 9"><path d="M1 1L4 3.5L7 1M1 5L4 7.5L7 5" fill="none" stroke="#000" stroke-width="1.6"/></svg>
<div class="a" style="left:75px;top:447px;width:342px;height:196px;background:#cacaca;box-shadow:inset 1px 1px 0 #808080,inset -1px -1px 0 #fff"></div>
<svg style="left:75px;top:470px;" width="341" height="149" viewBox="0 0 341 149"><defs><linearGradient id="tbl" x1="0" y1="0" x2="1" y2="0.4"><stop offset="0" stop-color="#a6b8ca"/><stop offset="0.55" stop-color="#b4c0cc"/><stop offset="1" stop-color="#c0c8d0"/></linearGradient><linearGradient id="lcd" x1="0" y1="0" x2="0" y2="1"><stop offset="0" stop-color="#9aae64"/><stop offset="1" stop-color="#88a058"/></linearGradient></defs><rect width="341" height="149" fill="url(#tbl)"/><path d="M0 28H80M0 58H60M0 88H55M0 112H90M45 20L25 149M95 40L80 149" stroke="#c0ccd8" stroke-width="3" fill="none" opacity="0.35"/><path d="M85 0H280L341 30V62L330 58L250 22L200 25L100 40L85 40Z" fill="#d4c6bc"/><path d="M190 0H215V25H190Z" fill="#b8c2cc" opacity="0.6"/><path d="M280 0H341V29Z" fill="#eec862"/><path d="M279 0L341 30" stroke="#f2f2f0" stroke-width="2"/><path d="M0 0H50L59 22L20 24H0Z" fill="#e8ecf2"/><path d="M50 1Q65 8 80 2" stroke="#9aa0a8" stroke-width="2" fill="none"/><path d="M60 36L74 38" stroke="#1a2a6a" stroke-width="2.5"/><path d="M74 38Q100 30 115 12Q135 0 145 4Q150 10 135 40" stroke="#181818" stroke-width="1.4" fill="none"/><path d="M74 39Q105 35 118 14Q138 5 147 8Q152 15 140 40M78 44Q90 45 95 50" stroke="#d83030" stroke-width="1.5" fill="none"/><path d="M110 40Q150 25 200 28Q230 30 250 20M150 30Q170 8 190 15Q200 20 215 12L240 5Q258 2 262 20" stroke="#1a1a1a" stroke-width="1.6" fill="none"/><path d="M145 40Q170 25 205 22L245 12Q255 10 265 20M210 25Q230 28 245 24" stroke="#d82828" stroke-width="1.6" fill="none"/><rect x="193" y="12" width="24" height="14" rx="2" fill="#202020"/><path d="M113 15L125 10" stroke="#f0f0f0" stroke-width="3"/><path d="M218 95H336L341 120L320 145H230Z" fill="#b4c0cc" opacity="0.7"/><rect x="262" y="108" width="24" height="12" fill="#c6d0da" opacity="0.8"/><path d="M202 20H229L247 55H213L202 45Z" fill="#43352c"/><rect x="217" y="37" width="15" height="13" fill="#e0c850" transform="rotate(-4 224 43)"/><path d="M229 20H274L305 55H247Z" fill="#4a4038"/><path d="M231.0 21L247.0 55" stroke="#0c0c0c" stroke-width="2.1"/><path d="M234.2 21L251.5 55" stroke="#0c0c0c" stroke-width="2.1"/><path d="M237.5 21L255.9 55" stroke="#0c0c0c" stroke-width="2.1"/><path d="M240.7 21L260.4 55" stroke="#0c0c0c" stroke-width="2.1"/><path d="M243.9 21L264.8 55" stroke="#0c0c0c" stroke-width="2.1"/><path d="M247.2 21L269.3 55" stroke="#0c0c0c" stroke-width="2.1"/><path d="M250.4 21L273.8 55" stroke="#0c0c0c" stroke-width="2.1"/><path d="M253.6 21L278.2 55" stroke="#0c0c0c" stroke-width="2.1"/><path d="M256.8 21L282.7 55" stroke="#0c0c0c" stroke-width="2.1"/><path d="M260.1 21L287.2 55" stroke="#0c0c0c" stroke-width="2.1"/><path d="M263.3 21L291.6 55" stroke="#0c0c0c" stroke-width="2.1"/><path d="M266.5 21L296.1 55" stroke="#0c0c0c" stroke-width="2.1"/><path d="M269.8 21L300.5 55" stroke="#0c0c0c" stroke-width="2.1"/><path d="M273.0 21L305.0 55" stroke="#0c0c0c" stroke-width="2.1"/><path d="M274 21L335 55H305Z" fill="#5a4838"/><path d="M212 55H336Q340 58 338 62L335 92H214Z" fill="#1a1817"/><circle cx="230" cy="64" r="8" fill="#0c0c0c" stroke="#2a2a2a" stroke-width="1"/><rect x="251" y="61" width="10" height="3" fill="#a88030" opacity="0.8"/><circle cx="251" cy="69" r="1.6" fill="#a0f060"/><circle cx="259" cy="69" r="1.6" fill="#a0f060"/><rect x="268" y="65" width="36" height="19" fill="#d6d2bc"/><path d="M272 72Q286 67 300 72" stroke="#6a6a60" stroke-width="0.8" fill="none"/><rect x="221" y="78" width="32" height="9" fill="#2a2828"/><rect x="222" y="81" width="5" height="5" fill="#e03030"/><rect x="230" y="81" width="5" height="5" fill="#4a4a4a"/><rect x="238" y="81" width="5" height="5" fill="#4a4a4a"/><rect x="246" y="81" width="5" height="5" fill="#e03030"/><path d="M270 88H303" stroke="#6a5a40" stroke-width="2"/><rect x="309" y="76" width="8" height="11" fill="#2a2a2a" stroke="#505050" stroke-width="0.8"/><rect x="319" y="76" width="8" height="11" fill="#2a2a2a" stroke="#505050" stroke-width="0.8"/><circle cx="321" cy="63" r="5.5" fill="#0a0a0a" stroke="#303030"/><path d="M25 116Q40 100 62 82" stroke="#141414" stroke-width="2.2" fill="none"/><path d="M59 71L100 40H216L220 71Z" fill="#725c4c"/><rect x="88.0" y="57.0" width="1.3" height="4" fill="#4a3a30"/><rect x="92.2" y="57.0" width="1.3" height="4" fill="#4a3a30"/><rect x="96.4" y="57.0" width="1.3" height="4" fill="#4a3a30"/><rect x="100.6" y="57.0" width="1.3" height="4" fill="#4a3a30"/><rect x="104.8" y="57.0" width="1.3" height="4" fill="#4a3a30"/><rect x="109.0" y="57.0" width="1.3" height="4" fill="#4a3a30"/><rect x="113.2" y="57.0" width="1.3" height="4" fill="#4a3a30"/><rect x="117.4" y="57.0" width="1.3" height="4" fill="#4a3a30"/><rect x="121.6" y="57.0" width="1.3" height="4" fill="#4a3a30"/><rect x="125.8" y="57.0" width="1.3" height="4" fill="#4a3a30"/><rect x="130.0" y="57.0" width="1.3" height="4" fill="#4a3a30"/><rect x="134.2" y="57.0" width="1.3" height="4" fill="#4a3a30"/><rect x="138.4" y="57.0" width="1.3" height="4" fill="#4a3a30"/><rect x="142.6" y="57.0" width="1.3" height="4" fill="#4a3a30"/><rect x="146.8" y="57.0" width="1.3" height="4" fill="#4a3a30"/><rect x="151.0" y="57.0" width="1.3" height="4" fill="#4a3a30"/><rect x="156.0" y="55.0" width="1.3" height="5" fill="#4a3a30"/><rect x="160.2" y="55.0" width="1.3" height="5" fill="#4a3a30"/><rect x="164.4" y="55.0" width="1.3" height="5" fill="#4a3a30"/><rect x="168.6" y="55.0" width="1.3" height="5" fill="#4a3a30"/><rect x="172.8" y="55.0" width="1.3" height="5" fill="#4a3a30"/><rect x="177.0" y="55.0" width="1.3" height="5" fill="#4a3a30"/><rect x="181.2" y="55.0" width="1.3" height="5" fill="#4a3a30"/><rect x="185.4" y="55.0" width="1.3" height="5" fill="#4a3a30"/><rect x="189.6" y="55.0" width="1.3" height="5" fill="#4a3a30"/><path d="M59 71L100 40" stroke="#5a4a3e" stroke-width="1.5"/><rect x="58" y="70" width="162" height="51" rx="4" fill="#2e3036"/><rect x="59" y="71" width="160" height="2.5" fill="#4a4c52"/><rect x="60" y="81" width="12" height="5" rx="1" fill="#4a80c8"/><rect x="61" y="90" width="10" height="3" fill="#3a3c42"/><rect x="61" y="97" width="10" height="3" fill="#3a3c42"/><circle cx="67" cy="113" r="3" fill="#111"/><circle cx="84" cy="86" r="6.5" fill="#111"/><circle cx="84" cy="116" r="6" fill="#111"/><rect x="78" y="96" width="12" height="8" fill="#222"/><rect x="95" y="75" width="67" height="37" rx="2" fill="#1e2024"/><rect x="98" y="77" width="61" height="32" fill="url(#lcd)"/><text x="153" y="92" font-family="Liberation Sans" font-style="italic" font-size="12" fill="#2a3418" text-anchor="end" textLength="44" lengthAdjust="spacingAndGlyphs">14.176.00</text><path d="M101 97H120M128 96H152M101 104H112M118 104H128M138 104H155" stroke="#3a4a22" stroke-width="1.8"/><path d="M101 116H110M114 116H126M130 116H142M146 116H156" stroke="#707278" stroke-width="2.5"/><rect x="164" y="76" width="7" height="5" rx="1" fill="#b8bcc4"/><rect x="164" y="84" width="6" height="3" fill="#80848a"/><rect x="164" y="100" width="7" height="4" fill="#9a9ea6"/><rect x="164" y="108" width="7" height="4" fill="#80848a"/><circle cx="195" cy="99" r="21" fill="#161616"/><circle cx="195" cy="99" r="19" fill="none" stroke="#2a2a2a" stroke-width="3" stroke-dasharray="1.5 1"/><circle cx="195" cy="100" r="14" fill="#1a1a1a"/><circle cx="199" cy="108" r="7" fill="#0a0a0a" stroke="#3a3a3a" stroke-width="2"/><rect x="96" y="121" width="90" height="11" fill="#6e747c"/><rect x="96" y="130" width="90" height="2" fill="#a8b0b8"/><path d="M189 122L187 149M192 122L190 149" stroke="#3a3a3a" stroke-width="1.5"/><path d="M0 118Q5 115 25 115Q40 116 42 124Q41 138 35 149H0Z" fill="#1e1e1e"/><path d="M2 121Q22 119 40 122M2 126Q22 124 39 127M2 131Q20 129 37 132" stroke="#4a4a4a" stroke-width="1"/><path d="M240 149Q290 138 341 133V149Z" fill="#eceef0"/><text x="338" y="143.5" font-family="Liberation Sans" font-weight="bold" font-size="7.6" fill="#111" text-anchor="end" textLength="188" lengthAdjust="spacingAndGlyphs">Fast Stone běží pod Win XP v Oracle VM Virtual Box pod Linuxem</text></svg>
<div class="t sx" style="left:77.00px;top:647.69px;font-size:11px;color:#000;transform:scaleX(0.8891);white-space:pre;">900 x 394 (0.35 MP)  24bit  JPG  211 KB  2018-03-02 11:32:22</div>
<div class="t sx" style="left:357.00px;top:647.69px;font-size:11px;color:#2050a0;transform:scaleX(0.8807);font-weight:bold;">1:1</div>
<svg style="left:380px;top:645px;" width="13" height="13" viewBox="0 0 13 13"><rect x="2.5" y="3.5" width="8" height="6" fill="#b8d0f8" stroke="#2060c0" stroke-width="1.2"/><path d="M6.5 0.5V3M6.5 10V12.5M0 6.5H2.5M10.5 6.5H13" stroke="#2060c0" stroke-width="1.4"/></svg>
<svg style="left:400px;top:645px;" width="14" height="13" viewBox="0 0 14 13"><rect x="2.5" y="2.5" width="9" height="8" fill="#b8d0f8" stroke="#2060c0" stroke-width="1.2"/><path d="M0.5 4V0.5H4M10 0.5H13.5V4M13.5 9V12.5H10M4 12.5H0.5V9" fill="none" stroke="#2060c0" stroke-width="1.2"/></svg>
<svg style="left:425.5px;top:154.5px;" width="14" height="12" viewBox="0 0 14 12"><path d="M0.8 6L6.5 0.8V3.5H13.2V8.5H6.5V11.2Z" fill="#f8c838" stroke="#d89010" stroke-width="1.2" stroke-linejoin="round"/></svg>
<svg style="left:449.5px;top:154.5px;" width="14" height="12" viewBox="0 0 14 12"><path d="M13.2 6L7.5 0.8V3.5H0.8V8.5H7.5V11.2Z" fill="#f4f4f4" stroke="#a0a0a0" stroke-width="1.2" stroke-linejoin="round"/></svg>
<svg style="left:472.5px;top:153px;" width="16" height="15" viewBox="0 0 16 15"><path d="M0.5 3Q0.5 1.5 2 1.5H6L7.5 3H14Q15.5 3 15.5 4.5V13Q15.5 14.5 14 14.5H2Q0.5 14.5 0.5 13Z" fill="#f4cc50" stroke="#c89020" stroke-width="1"/><path d="M1 6H15" stroke="#fff0a8" stroke-width="1.2"/><path d="M1 12.5H15" stroke="#e0a830" stroke-width="1.5"/><path d="M8 2V12M4.5 5.5L8 2L11.5 5.5" stroke="#10a010" stroke-width="2.4" fill="none"/></svg>
<svg style="left:496.5px;top:153px;" width="16" height="15" viewBox="0 0 16 15"><path d="M0.5 3Q0.5 1.5 2 1.5H6L7.5 3H14Q15.5 3 15.5 4.5V13Q15.5 14.5 14 14.5H2Q0.5 14.5 0.5 13Z" fill="#f4cc50" stroke="#c89020" stroke-width="1"/><path d="M1 6H15" stroke="#fff0a8" stroke-width="1.2"/><path d="M1 12.5H15" stroke="#e0a830" stroke-width="1.5"/><path d="M4 8Q4 4 8 4H10M12 7Q12 11 8 11H6" stroke="#10a010" stroke-width="2" fill="none"/><path d="M9 2L12 4L9 6Z" fill="#10a010"/><path d="M7 9L4 11L7 13Z" fill="#10a010"/></svg>
<svg style="left:521px;top:153px;" width="16" height="15" viewBox="0 0 16 15"><path d="M0.5 3Q0.5 1.5 2 1.5H6L7.5 3H14Q15.5 3 15.5 4.5V13Q15.5 14.5 14 14.5H2Q0.5 14.5 0.5 13Z" fill="#f4cc50" stroke="#c89020" stroke-width="1"/><path d="M1 6H15" stroke="#fff0a8" stroke-width="1.2"/><path d="M1 12.5H15" stroke="#e0a830" stroke-width="1.5"/><path d="M8 4L9.3 7H12.5L10 9L11 12L8 10.2L5 12L6 9L3.5 7H6.7Z" fill="#f8e080" stroke="#c08020" stroke-width="0.7"/></svg>
<svg style="left:545px;top:153px;" width="16" height="15" viewBox="0 0 16 15"><path d="M0.5 3Q0.5 1.5 2 1.5H6L7.5 3H14Q15.5 3 15.5 4.5V13Q15.5 14.5 14 14.5H2Q0.5 14.5 0.5 13Z" fill="#f4cc50" stroke="#c89020" stroke-width="1"/><path d="M1 6H15" stroke="#fff0a8" stroke-width="1.2"/><path d="M1 12.5H15" stroke="#e0a830" stroke-width="1.5"/><path d="M10 1.5V7M7.2 4.2H12.8M8 2.2L12 6.2M12 2.2L8 6.2" stroke="#e02020" stroke-width="1"/></svg>
<svg style="left:569px;top:153px;" width="15" height="15" viewBox="0 0 15 15"><path d="M4 1H13Q14.5 1 14.5 2.5V9H4Z" fill="#f4cc50" stroke="#c89020"/><rect x="0.5" y="8" width="8" height="6.5" fill="#c8ccff" stroke="#5a60c8"/><path d="M5 10L11 4M7.5 4H11V7.5" stroke="#10a010" stroke-width="2" fill="none"/></svg>
<svg style="left:593px;top:153px;" width="15" height="15" viewBox="0 0 15 15"><path d="M4 1H13Q14.5 1 14.5 2.5V9H4Z" fill="#f4cc50" stroke="#c89020"/><rect x="0.5" y="8" width="8" height="6.5" fill="#c8ccff" stroke="#5a60c8"/><path d="M3 7H12M9 4L12 7L9 10" stroke="#10a010" stroke-width="2" fill="none"/></svg>
<svg style="left:618px;top:155px;" width="13" height="12" viewBox="0 0 13 12"><path d="M1.5 1.5L11.5 10.5M11.5 1.5L1.5 10.5" stroke="#e02818" stroke-width="2.6"/></svg>
<svg style="left:642px;top:155px;" width="14" height="13" viewBox="0 0 14 13"><rect x="0.5" y="0.5" width="13" height="12" fill="#f8f8ff" stroke="#5a6ac8"/><rect x="0.5" y="0.5" width="13" height="2" fill="#5a6ac8"/><rect x="2" y="4" width="3" height="2.5" fill="#20a020"/><rect x="5.5" y="4" width="3" height="2.5" fill="#20a020"/><rect x="9" y="4" width="3" height="2.5" fill="#20a020"/><rect x="2" y="8" width="3" height="2.5" fill="#e8a020"/><rect x="5.5" y="8" width="3" height="2.5" fill="#e8a020"/><rect x="9" y="8" width="3" height="2.5" fill="#e8a020"/></svg>
<svg style="left:664.5px;top:155px;" width="15" height="13" viewBox="0 0 15 13"><path d="M0.5 0.5H14.5M0.5 3H14.5M0.5 5.5H14.5M0.5 8H14.5M0.5 10.5H14.5M0.5 12.5H14.5M0.5 0.5V12.5M4 0.5V12.5M7.5 0.5V12.5M11 0.5V12.5M14.5 0.5V12.5" stroke="#7a80d0" stroke-width="0.8"/></svg>
<svg style="left:689px;top:155px;" width="14" height="13" viewBox="0 0 14 13"><path d="M0 1.5H3M5 1.5H8M10 1.5H13M0 6.5H3M5 6.5H8M10 6.5H13M0 11.5H3M5 11.5H8M10 11.5H13" stroke="#6a74c8" stroke-width="1.6"/></svg>
<div class="field" style="left:714px;top:153px;width:105px;height:17px;box-shadow:inset 1px 1px 0 #a0a0a0,inset -1px -1px 0 #fff"></div>
<div class="t sx" style="left:716.50px;top:155.69px;font-size:11px;color:#000;transform:scaleX(0.8441);">Obrázky &amp; Videa</div>
<div class="sbtn" style="left:804px;top:154px;width:14px;height:15px;box-shadow:inset 1px 1px 0 #fff,inset -1px -1px 0 #a0a0a0"></div>
<svg style="left:808px;top:160px;" width="6" height="3" viewBox="0 0 6 3"><path d="M0 0H6L3 3Z" fill="#000"/></svg>
<div class="field" style="left:825px;top:153px;width:86px;height:17px;box-shadow:inset 1px 1px 0 #a0a0a0"></div>
<div class="t sx" style="left:827.50px;top:155.69px;font-size:11px;color:#000;transform:scaleX(0.8718);">Název souboru</div>
<div class="field" style="left:421px;top:172px;width:463px;height:19px"></div>
<svg style="left:425px;top:176px;" width="14" height="13" viewBox="0 0 14 13"><path d="M0.5 2.5Q0.5 1 2 1H5L6.5 2.5H12Q13.5 2.5 13.5 4V11Q13.5 12.5 12 12.5H2Q0.5 12.5 0.5 11Z" fill="#f4d070" stroke="#c89a30"/><path d="M1 5H13" stroke="#fff0b0" stroke-width="1.2"/></svg>
<div class="t sx" style="left:440.00px;top:176.69px;font-size:11px;color:#000;transform:scaleX(0.8767);">C:\Documents and Settings\Jyrka Zymola\Dokumenty\club\obrazky_dratove_anteny\EFCFD\</div>
<div class="sbtn" style="left:868px;top:174px;width:15px;height:15px"></div>
<svg style="left:872px;top:180px;" width="7" height="4" viewBox="0 0 7 4"><path d="M0 0H7L3.5 3.5Z" fill="#000"/></svg>
<svg style="left:889px;top:174px;" width="16" height="17" viewBox="0 0 16 17"><ellipse cx="8" cy="3" rx="6.5" ry="2" fill="#e8ecff" stroke="#6a70c8"/><path d="M1.5 3.5L2.8 15Q8 17 13.2 15L14.5 3.5" fill="#dde2ff" stroke="#6a70c8"/><path d="M4 6V14M8 6V15M12 6V14" stroke="#c0c4f0" stroke-width="0.8"/></svg>
<div class="a" style="left:421px;top:194px;width:489px;height:467px;background:#f1efe7;box-shadow:inset 1px 1px 0 #808080,inset 2px 2px 0 #404040,inset -1px -1px 0 #fff,inset -2px -2px 0 #d4d0c8"></div>
<div class="a" style="left:423px;top:196px;width:471px;height:464px;overflow:hidden">
<div class="a" style="left:3px;top:-30px;width:116px;height:103px;border:1px solid #a8a69e;border-radius:6px"></div>
<svg style="left:7.3px;top:-14.0px;overflow:hidden;" width="107" height="61" viewBox="0 0 107 61"><defs><linearGradient id="g1" x1="0" y1="0" x2="0.3" y2="1"><stop offset="0" stop-color="#c4d4e6"/><stop offset="0.6" stop-color="#d8e2ec"/><stop offset="1" stop-color="#c8d6e4"/></linearGradient></defs><rect width="107" height="61" fill="url(#g1)"/><path d="M0 28L40 29" stroke="#151515" stroke-width="2.5"/><path d="M12 28Q17 24 22 28Q17 32 12 28M22 28Q27 24 32 28Q27 32 22 28" fill="#403830"/><path d="M38 24Q40 17 55 16H82Q88 18 86 24L82 28L86 34Q86 42 70 43H52Q40 42 40 34Z" fill="#141414"/><circle cx="56" cy="29" r="3.2" fill="#f0f4f8"/><path d="M62 29H107" stroke="#c83020" stroke-width="1"/><path d="M88 29L95 21" stroke="#c83020" stroke-width="1"/></svg>
<div class="t sx" style="left:13.00px;top:59.87px;font-size:9.6px;color:#4e4e4e;transform:scaleX(0.9468);-webkit-text-stroke:0;letter-spacing:1px;">900x513</div>
<div class="t sx" style="left:92.00px;top:59.87px;font-size:9.6px;color:#4e4e4e;transform:scaleX(0.8075);-webkit-text-stroke:0;letter-spacing:1px;">JPG</div>
<div class="t sx" style="left:19.20px;top:78.89px;font-size:11px;color:#000;transform:scaleX(0.8941);">krajni_izol_drat.jpg</div>
<div class="a" style="left:126px;top:-30px;width:116px;height:103px;border:1px solid #a8a69e;border-radius:6px"></div>
<svg style="left:130.3px;top:-22.0px;overflow:hidden;" width="107" height="77" viewBox="0 0 107 77"><rect width="107" height="77" fill="#768e52"/><path d="M0 10L10 40L5 77M30 77L50 50M70 77L90 60M100 20L107 50M20 20L35 60M60 70L75 40M85 10L95 30" stroke="#5e7a40" stroke-width="3" opacity="0.6"/><path d="M8 5L12 20M45 55L50 70M80 68L90 75M95 8L100 25M25 50L30 62" stroke="#9aae70" stroke-width="2.5" opacity="0.7"/><path d="M37 21Q50 34 71 26L74 21Z" fill="#b8a27a"/><path d="M0 22Q20 24 40 34" stroke="#202020" stroke-width="2.5" fill="none"/><path d="M28 32Q12 40 14 60Q15 70 22 72" stroke="#1a1a1a" stroke-width="2" fill="none"/><circle cx="23" cy="72" r="2.5" fill="none" stroke="#d8d8d8" stroke-width="1.5"/><path d="M28 30L52 36L54 46L30 42Z" fill="#d4d8dc" stroke="#909498" stroke-width="0.6"/><circle cx="36" cy="37" r="1.8" fill="#888"/><circle cx="48" cy="41" r="1.8" fill="#888"/><path d="M55 40L68 36Q90 38 104 50Q106 60 100 66L70 62Q58 55 55 48Z" fill="#2a2c30"/><path d="M62 46L107 56" stroke="#e02818" stroke-width="1.5"/><ellipse cx="72" cy="46" rx="4" ry="3" fill="#6e8a4c"/></svg>
<div class="t sx" style="left:136.00px;top:59.87px;font-size:9.6px;color:#4e4e4e;transform:scaleX(0.9468);-webkit-text-stroke:0;letter-spacing:1px;">900x651</div>
<div class="t sx" style="left:215.00px;top:59.87px;font-size:9.6px;color:#4e4e4e;transform:scaleX(0.8075);-webkit-text-stroke:0;letter-spacing:1px;">JPG</div>
<div class="t sx" style="left:141.00px;top:78.89px;font-size:11px;color:#000;transform:scaleX(0.8792);">krajni_izol_koax.jpg</div>
<div class="a" style="left:249px;top:-30px;width:116px;height:103px;border:1px solid #a8a69e;border-radius:6px"></div>
<svg style="left:296.3px;top:-23.5px;overflow:hidden;" width="21" height="80" viewBox="0 0 21 80"><rect width="21" height="80" fill="#b4c0ca"/><rect x="0" y="0" width="21" height="80" fill="#c8d2da" opacity="0.4"/><path d="M10.5 0V80" stroke="#202020" stroke-width="1"/><path d="M9 38Q10.5 34 12 38V72Q10.5 76 9 72Z" fill="#101010"/><ellipse cx="10.5" cy="44" rx="2.5" ry="3" fill="#101010"/></svg>
<div class="t sx" style="left:259.00px;top:59.87px;font-size:9.6px;color:#4e4e4e;transform:scaleX(0.9468);-webkit-text-stroke:0;letter-spacing:1px;">159x600</div>
<div class="t sx" style="left:338.00px;top:59.87px;font-size:9.6px;color:#4e4e4e;transform:scaleX(0.8075);-webkit-text-stroke:0;letter-spacing:1px;">JPG</div>
<div class="t sx" style="left:275.85px;top:78.89px;font-size:11px;color:#000;transform:scaleX(0.8707);">line_izol_2.jpg</div>
<div class="a" style="left:3px;top:98px;width:116px;height:103px;border:1px solid #a8a69e;border-radius:6px"></div>
<svg style="left:7.3px;top:128.0px;overflow:hidden;" width="107" height="33" viewBox="0 0 107 33"><defs><linearGradient id="g2" x1="0" y1="0" x2="1" y2="0"><stop offset="0" stop-color="#b4c6d8"/><stop offset="1" stop-color="#e4ecf4"/></linearGradient></defs><rect width="107" height="33" fill="url(#g2)"/><path d="M0 14Q25 12 30 16L107 18" stroke="#505050" stroke-width="1.2" fill="none"/><path d="M10 18Q12 22 24 20L107 20" stroke="#606060" stroke-width="1.2" fill="none"/><ellipse cx="30" cy="16" rx="6" ry="3.5" fill="#101010"/><rect x="46" y="17" width="32" height="5" rx="2" fill="#5a5a5a"/><path d="M3.0 3.0H15.0" stroke="#303040" stroke-width="0.48" stroke-dasharray="2 1" opacity="0.55"/><path d="M3.0 5.5H19.0" stroke="#303040" stroke-width="0.48" stroke-dasharray="2 1" opacity="0.55"/><path d="M40.0 9.0H58.0" stroke="#303040" stroke-width="0.48" stroke-dasharray="2 1" opacity="0.55"/><path d="M40.0 11.5H64.0" stroke="#303040" stroke-width="0.48" stroke-dasharray="2 1" opacity="0.55"/><path d="M68.0 26.0H88.4" stroke="#303040" stroke-width="0.48" stroke-dasharray="2 1" opacity="0.55"/><path d="M68.0 28.5H95.2" stroke="#303040" stroke-width="0.48" stroke-dasharray="2 1" opacity="0.55"/><path d="M3.0 28.0H15.0" stroke="#909090" stroke-width="0.48" stroke-dasharray="2 1" opacity="0.55"/></svg>
<div class="t sx" style="left:13.00px;top:187.87px;font-size:9.6px;color:#4e4e4e;transform:scaleX(0.9468);-webkit-text-stroke:0;letter-spacing:1px;">900x281</div>
<div class="t sx" style="left:92.00px;top:187.87px;font-size:9.6px;color:#4e4e4e;transform:scaleX(0.8075);-webkit-text-stroke:0;letter-spacing:1px;">JPG</div>
<div class="t sx" style="left:26.45px;top:206.89px;font-size:11px;color:#000;transform:scaleX(0.8902);">line_izolator.jpg</div>
<div class="a" style="left:126px;top:98px;width:116px;height:103px;border:1px solid #a8a69e;border-radius:6px"></div>
<svg style="left:130.3px;top:109.0px;overflow:hidden;" width="107" height="71" viewBox="0 0 107 71"><rect width="107" height="71" fill="#c2c2c4"/><ellipse cx="53" cy="39" rx="28" ry="24" fill="#d4d4d6"/><ellipse cx="55" cy="37" rx="35" ry="29" fill="none" stroke="#121212" stroke-width="13"/><ellipse cx="55" cy="37" rx="29" ry="24" fill="none" stroke="#2a2a2a" stroke-width="1.5"/><path d="M12 8Q18 2 28 6Q30 14 22 16Q12 16 12 8Z" fill="#161616"/><path d="M82 16Q92 10 100 16Q102 24 92 26Q82 24 82 16Z" fill="#161616"/><path d="M8 40L16 46L12 56L4 52Z" fill="#a8a8a8" stroke="#404040" stroke-width="0.8"/><path d="M40.0 25.0H53.2" stroke="#202020" stroke-width="0.6400000000000001" stroke-dasharray="2 1" opacity="0.55"/><path d="M40.0 28.0H57.6" stroke="#202020" stroke-width="0.6400000000000001" stroke-dasharray="2 1" opacity="0.55"/><path d="M35.0 35.0H53.0" stroke="#2040c0" stroke-width="0.8" stroke-dasharray="2 1" opacity="0.55"/><path d="M38.0 38.5H53.6" stroke="#c02020" stroke-width="0.8" stroke-dasharray="2 1" opacity="0.55"/><path d="M8 58H16M8 61H14" stroke="#303030" stroke-width="0.8"/><path d="M88 66H100" stroke="#3050c0" stroke-width="1"/></svg>
<div class="t sx" style="left:136.00px;top:187.87px;font-size:9.6px;color:#4e4e4e;transform:scaleX(0.9468);-webkit-text-stroke:0;letter-spacing:1px;">900x595</div>
<div class="t sx" style="left:215.00px;top:187.87px;font-size:9.6px;color:#4e4e4e;transform:scaleX(0.8075);-webkit-text-stroke:0;letter-spacing:1px;">JPG</div>
<div class="t sx" style="left:164.80px;top:206.89px;font-size:11px;color:#000;transform:scaleX(0.8986);">MINI.jpg</div>
<div class="a" style="left:249px;top:98px;width:116px;height:103px;border:1px solid #a8a69e;border-radius:6px"></div>
<svg style="left:266.3px;top:104.5px;overflow:hidden;" width="81" height="80" viewBox="0 0 81 80"><rect width="81" height="80" fill="#fff"/><path d="M6 12L47 28L75 21M5 44L47 28" stroke="#a0a8d0" stroke-width="0.7" fill="none"/><path d="M25 37Q45 -2 65 25" stroke="#90a0e0" stroke-width="0.8" fill="none"/><path d="M47 2V28" stroke="#d8d0c0" stroke-width="0.8"/><path d="M25 35L70 21" stroke="#303030" stroke-width="1"/><path d="M33 50L62 22" stroke="#5070d8" stroke-width="0.9"/><path d="M68 20V78" stroke="#e83030" stroke-width="1.6"/><path d="M55 36L78 30" stroke="#e04040" stroke-width="0.8"/><path d="M72 5V25" stroke="#e04040" stroke-width="0.8" stroke-dasharray="1 3"/><path d="M63 38Q60 60 62 78" stroke="#c0a0a0" stroke-width="0.6" fill="none"/><path d="M3.0 47.0H30.0" stroke="#2040e0" stroke-width="0.8" stroke-dasharray="3 0.6" opacity="0.55"/><path d="M3.0 49.4H39.0" stroke="#2040e0" stroke-width="0.8" stroke-dasharray="3 0.6" opacity="0.55"/><path d="M3.0 55.0H36.0" stroke="#e02020" stroke-width="0.8" stroke-dasharray="3 0.6" opacity="0.55"/><path d="M3.0 57.4H47.0" stroke="#e02020" stroke-width="0.8" stroke-dasharray="3 0.6" opacity="0.55"/><path d="M3.0 59.8H58.0" stroke="#e02020" stroke-width="0.8" stroke-dasharray="3 0.6" opacity="0.55"/><path d="M3.0 73.0H27.0" stroke="#202020" stroke-width="0.8" stroke-dasharray="3 0.5" opacity="0.55"/></svg>
<div class="t sx" style="left:259.00px;top:187.87px;font-size:9.6px;color:#4e4e4e;transform:scaleX(0.9468);-webkit-text-stroke:0;letter-spacing:1px;">490x481</div>
<div class="t sx" style="left:338.00px;top:187.87px;font-size:9.6px;color:#4e4e4e;transform:scaleX(0.7352);-webkit-text-stroke:0;letter-spacing:1px;">PNG</div>
<div class="t sx" style="left:253.85px;top:206.89px;font-size:11px;color:#000;transform:scaleX(0.9012);">nevhodny_system_na...</div>
<div class="a" style="left:3px;top:226px;width:116px;height:103px;border:1px solid #a8a69e;border-radius:6px"></div>
<svg style="left:7.8px;top:233.5px;overflow:hidden;" width="106" height="78" viewBox="0 0 106 78"><rect width="106" height="78" fill="#fff"/><path d="M10 44Q45 -10 70 22" stroke="#90a0e0" stroke-width="1.2" fill="none"/><path d="M10 40L70 20M8 12L70 30M50 6V26" stroke="#c0c0c8" stroke-width="0.8"/><path d="M25 38L70 20" stroke="#505050" stroke-width="1.4"/><path d="M20 25L35 56" stroke="#707070" stroke-width="0.8"/><path d="M50 60Q65 50 66 36" stroke="#707070" stroke-width="0.6" fill="none"/><path d="M70 20V48" stroke="#4050e0" stroke-width="1.8"/><rect x="67" y="46" width="6" height="4" fill="#fff" stroke="#3040d0" stroke-width="1"/><path d="M70 50V76" stroke="#e03838" stroke-width="1.8"/><path d="M66 76H74" stroke="#e03838" stroke-width="1.5"/><path d="M70 20L74 20" stroke="#e02020"/><rect x="48" y="26" width="2" height="2" fill="#e02020"/><path d="M5.0 58.0H32.0" stroke="#404040" stroke-width="0.8" stroke-dasharray="3 0.6" opacity="0.55"/><path d="M5.0 61.0H29.0" stroke="#2030e0" stroke-width="0.8" stroke-dasharray="3 0.6" opacity="0.55"/><path d="M5.0 64.0H33.8" stroke="#e02020" stroke-width="0.8" stroke-dasharray="3 0.6" opacity="0.55"/><path d="M5.0 67.0H27.8" stroke="#505050" stroke-width="0.8" stroke-dasharray="3 0.6" opacity="0.55"/></svg>
<div class="t sx" style="left:13.00px;top:315.87px;font-size:9.6px;color:#4e4e4e;transform:scaleX(0.9468);-webkit-text-stroke:0;letter-spacing:1px;">649x477</div>
<div class="t sx" style="left:92.00px;top:315.87px;font-size:9.6px;color:#4e4e4e;transform:scaleX(0.7352);-webkit-text-stroke:0;letter-spacing:1px;">PNG</div>
<div class="t sx" style="left:8.40px;top:334.89px;font-size:11px;color:#000;transform:scaleX(0.8871);">proudy_zaric_napajec...</div>
<div class="a" style="left:126px;top:226px;width:116px;height:103px;border:1px solid #a8a69e;border-radius:6px"></div>
<svg style="left:130.3px;top:234.0px;overflow:hidden;" width="107" height="77" viewBox="0 0 107 77"><rect width="107" height="77" fill="#fff" stroke="#303030" stroke-width="0.8"/><path d="M20.0 5.0H59.0" stroke="#202030" stroke-width="0.8" stroke-dasharray="3 0.6" opacity="0.55"/><path d="M20.0 8.0H72.0" stroke="#202030" stroke-width="0.8" stroke-dasharray="3 0.6" opacity="0.55"/><path d="M25 17H95M25 15V19M60 15V19M95 15V19" stroke="#404040" stroke-width="0.5"/><path d="M30 27H65" stroke="#303030" stroke-width="1.2"/><rect x="22" y="25" width="9" height="4" fill="#f08080" stroke="#c02020" stroke-width="0.6"/><path d="M65 27H95" stroke="#808080" stroke-width="0.6"/><path d="M22 27Q8 27 12 40L14 50" stroke="#3040e0" stroke-width="1.4" fill="none"/><rect x="12" y="49" width="4" height="7" fill="#60c060" stroke="#209020" stroke-width="0.6"/><path d="M14 56V70" stroke="#c09090" stroke-width="0.6"/><path d="M20.0 33.0H30.8" stroke="#e03030" stroke-width="0.7200000000000001" stroke-dasharray="2 0.5" opacity="0.55"/><path d="M20.0 36.5H34.4" stroke="#e03030" stroke-width="0.7200000000000001" stroke-dasharray="2 0.5" opacity="0.55"/><path d="M50.0 37.0H78.8" stroke="#505050" stroke-width="0.48" stroke-dasharray="2 1" opacity="0.55"/><path d="M50.0 40.0H88.4" stroke="#505050" stroke-width="0.48" stroke-dasharray="2 1" opacity="0.55"/><path d="M20.0 53.0H30.8" stroke="#30a030" stroke-width="0.7200000000000001" stroke-dasharray="2 0.5" opacity="0.55"/><path d="M20.0 56.5H34.4" stroke="#30a030" stroke-width="0.7200000000000001" stroke-dasharray="2 0.5" opacity="0.55"/><rect x="8" y="61" width="30" height="7" fill="#fff" stroke="#2040e0" stroke-width="1.2"/><rect x="54" y="61" width="22" height="7" fill="#fff" stroke="#202020" stroke-width="1.2"/><path d="M38 64.5H54M76 64.5H92" stroke="#303030" stroke-width="0.6"/><path d="M20 72H40M85 72H97" stroke="#808080" stroke-width="0.5" stroke-dasharray="1 1"/><rect x="0" y="0" width="107" height="77" fill="none" stroke="#808080" stroke-width="0.8"/></svg>
<div class="t sx" style="left:136.00px;top:315.87px;font-size:9.6px;color:#4e4e4e;transform:scaleX(0.9468);-webkit-text-stroke:0;letter-spacing:1px;">900x651</div>
<div class="t sx" style="left:215.00px;top:315.87px;font-size:9.6px;color:#4e4e4e;transform:scaleX(0.7352);-webkit-text-stroke:0;letter-spacing:1px;">PNG</div>
<div class="t sx" style="left:157.55px;top:334.89px;font-size:11px;color:#000;transform:scaleX(0.8561);">schema.png</div>
<div class="a" style="left:249px;top:226px;width:116px;height:103px;border:1px solid #a8a69e;border-radius:6px"></div>
<svg style="left:253.3px;top:234.0px;overflow:hidden;" width="107" height="77" viewBox="0 0 107 77"><rect width="107" height="77" fill="#fff"/><path d="M4.0 4.0H19.0" stroke="#202020" stroke-width="0.8" stroke-dasharray="3 0.6" opacity="0.55"/><path d="M4.0 9.0H31.0" stroke="#505050" stroke-width="0.5599999999999999" stroke-dasharray="2 0.5" opacity="0.55"/><path d="M4.0 11.2H40.0" stroke="#505050" stroke-width="0.5599999999999999" stroke-dasharray="2 0.5" opacity="0.55"/><path d="M4.0 13.4H49.0" stroke="#505050" stroke-width="0.5599999999999999" stroke-dasharray="2 0.5" opacity="0.55"/><path d="M4.0 15.6H35.5" stroke="#505050" stroke-width="0.5599999999999999" stroke-dasharray="2 0.5" opacity="0.55"/><path d="M4.0 17.8H44.5" stroke="#505050" stroke-width="0.5599999999999999" stroke-dasharray="2 0.5" opacity="0.55"/><path d="M30 37L97 10" stroke="#c0a090" stroke-width="1"/><path d="M85 10H100M92 10L88 30M30 37H18M30 37L22 45" stroke="#909090" stroke-width="0.6"/><rect x="60" y="24" width="3" height="2" fill="#202020"/><path d="M24 40V52" stroke="#909090" stroke-width="0.7"/><rect x="22" y="52" width="5" height="9" rx="1.5" fill="#fff" stroke="#e03030" stroke-width="1.2"/><path d="M24 61V66M28 66Q35 62 42 67L44 70" stroke="#3050d0" stroke-width="1.2" fill="none"/><rect x="6" y="64" width="14" height="7" fill="#fff" stroke="#202020" stroke-width="1.4"/><path d="M52.0 40.0H77.2" stroke="#404040" stroke-width="0.5599999999999999" stroke-dasharray="2 0.5" opacity="0.55"/><path d="M52.0 42.2H85.6" stroke="#404040" stroke-width="0.5599999999999999" stroke-dasharray="2 0.5" opacity="0.55"/><path d="M52.0 44.4H94.0" stroke="#404040" stroke-width="0.5599999999999999" stroke-dasharray="2 0.5" opacity="0.55"/><path d="M52.0 46.6H81.4" stroke="#404040" stroke-width="0.5599999999999999" stroke-dasharray="2 0.5" opacity="0.55"/><path d="M52.0 48.8H89.8" stroke="#404040" stroke-width="0.5599999999999999" stroke-dasharray="2 0.5" opacity="0.55"/><path d="M52.0 51.0H77.2" stroke="#404040" stroke-width="0.5599999999999999" stroke-dasharray="2 0.5" opacity="0.55"/><path d="M52.0 28.0H70.0" stroke="#404040" stroke-width="0.5599999999999999" stroke-dasharray="2 0.5" opacity="0.55"/><path d="M52.0 30.2H76.0" stroke="#404040" stroke-width="0.5599999999999999" stroke-dasharray="2 0.5" opacity="0.55"/><path d="M52.0 32.4H82.0" stroke="#404040" stroke-width="0.5599999999999999" stroke-dasharray="2 0.5" opacity="0.55"/><path d="M52.0 34.6H73.0" stroke="#404040" stroke-width="0.5599999999999999" stroke-dasharray="2 0.5" opacity="0.55"/><path d="M80.0 67.0H92.0" stroke="#909090" stroke-width="0.5599999999999999" stroke-dasharray="2 1" opacity="0.55"/><path d="M18 53H21M18 58H21" stroke="#e03030" stroke-width="0.8"/></svg>
<div class="t sx" style="left:259.00px;top:315.87px;font-size:9.6px;color:#4e4e4e;transform:scaleX(0.9468);-webkit-text-stroke:0;letter-spacing:1px;">900x651</div>
<div class="t sx" style="left:338.00px;top:315.87px;font-size:9.6px;color:#4e4e4e;transform:scaleX(0.7352);-webkit-text-stroke:0;letter-spacing:1px;">PNG</div>
<div class="t sx" style="left:254.95px;top:334.89px;font-size:11px;color:#000;transform:scaleX(0.8870);">schema_coax_sloper....</div>
<div class="a" style="left:3px;top:354px;width:116px;height:103px;border:1px solid #a8a69e;border-radius:6px"></div>
<svg style="left:7.3px;top:362.0px;overflow:hidden;" width="107" height="77" viewBox="0 0 107 77"><rect width="107" height="77" fill="#fff"/><path d="M4.0 4.0H19.0" stroke="#202020" stroke-width="0.8" stroke-dasharray="3 0.6" opacity="0.55"/><path d="M4.0 9.0H31.0" stroke="#505050" stroke-width="0.5599999999999999" stroke-dasharray="2 0.5" opacity="0.55"/><path d="M4.0 11.2H40.0" stroke="#505050" stroke-width="0.5599999999999999" stroke-dasharray="2 0.5" opacity="0.55"/><path d="M4.0 13.4H49.0" stroke="#505050" stroke-width="0.5599999999999999" stroke-dasharray="2 0.5" opacity="0.55"/><path d="M4.0 15.6H35.5" stroke="#505050" stroke-width="0.5599999999999999" stroke-dasharray="2 0.5" opacity="0.55"/><path d="M4.0 17.8H44.5" stroke="#505050" stroke-width="0.5599999999999999" stroke-dasharray="2 0.5" opacity="0.55"/><path d="M30 37L97 10" stroke="#c0a090" stroke-width="1"/><path d="M85 10H100M92 10L88 30M30 37H18M30 37L22 45" stroke="#909090" stroke-width="0.6"/><rect x="60" y="24" width="3" height="2" fill="#202020"/><path d="M24 40V52" stroke="#909090" stroke-width="0.7"/><rect x="22" y="52" width="5" height="9" rx="1.5" fill="#fff" stroke="#e03030" stroke-width="1.2"/><path d="M24 61V66M28 66Q35 62 42 67L44 70" stroke="#3050d0" stroke-width="1.2" fill="none"/><rect x="6" y="64" width="14" height="7" fill="#fff" stroke="#202020" stroke-width="1.4"/><path d="M52.0 40.0H77.2" stroke="#404040" stroke-width="0.5599999999999999" stroke-dasharray="2 0.5" opacity="0.55"/><path d="M52.0 42.2H85.6" stroke="#404040" stroke-width="0.5599999999999999" stroke-dasharray="2 0.5" opacity="0.55"/><path d="M52.0 44.4H94.0" stroke="#404040" stroke-width="0.5599999999999999" stroke-dasharray="2 0.5" opacity="0.55"/><path d="M52.0 46.6H81.4" stroke="#404040" stroke-width="0.5599999999999999" stroke-dasharray="2 0.5" opacity="0.55"/><path d="M52.0 48.8H89.8" stroke="#404040" stroke-width="0.5599999999999999" stroke-dasharray="2 0.5" opacity="0.55"/><path d="M52.0 51.0H77.2" stroke="#404040" stroke-width="0.5599999999999999" stroke-dasharray="2 0.5" opacity="0.55"/><path d="M52.0 28.0H70.0" stroke="#404040" stroke-width="0.5599999999999999" stroke-dasharray="2 0.5" opacity="0.55"/><path d="M52.0 30.2H76.0" stroke="#404040" stroke-width="0.5599999999999999" stroke-dasharray="2 0.5" opacity="0.55"/><path d="M52.0 32.4H82.0" stroke="#404040" stroke-width="0.5599999999999999" stroke-dasharray="2 0.5" opacity="0.55"/><path d="M52.0 34.6H73.0" stroke="#404040" stroke-width="0.5599999999999999" stroke-dasharray="2 0.5" opacity="0.55"/><path d="M80.0 67.0H92.0" stroke="#909090" stroke-width="0.5599999999999999" stroke-dasharray="2 1" opacity="0.55"/><path d="M18 53H21M18 58H21" stroke="#e03030" stroke-width="0.8"/></svg>
<div class="t sx" style="left:13.00px;top:443.87px;font-size:9.6px;color:#4e4e4e;transform:scaleX(0.9468);-webkit-text-stroke:0;letter-spacing:1px;">900x651</div>
<div class="t sx" style="left:92.00px;top:443.87px;font-size:9.6px;color:#4e4e4e;transform:scaleX(0.7352);-webkit-text-stroke:0;letter-spacing:1px;">PNG</div>
<div class="a" style="left:126px;top:354px;width:116px;height:103px;border:1px solid #a8a69e;border-radius:6px"></div>
<svg style="left:138.3px;top:360.5px;overflow:hidden;" width="91" height="80" viewBox="0 0 91 80"><defs><radialGradient id="g3" cx="0.45" cy="0.5" r="0.6"><stop offset="0" stop-color="#e8e8e8"/><stop offset="1" stop-color="#b4b4b4"/></radialGradient></defs><rect width="91" height="80" fill="url(#g3)"/><ellipse cx="40" cy="44" rx="32" ry="30" fill="none" stroke="#111" stroke-width="9"/><ellipse cx="40" cy="44" rx="26" ry="24" fill="none" stroke="#252525" stroke-width="2"/><path d="M60 10Q70 30 75 50Q80 65 76 75" stroke="#151515" stroke-width="5" fill="none"/><path d="M58 8Q66 2 72 10Q74 20 66 24Q58 20 58 8Z" fill="#1a1a1a"/><path d="M20 62Q35 70 45 76Q50 80 55 74" stroke="#161616" stroke-width="6" fill="none"/><rect x="60" y="50" width="6" height="12" fill="#d8d8d8" stroke="#505050" stroke-width="0.8"/><ellipse cx="75" cy="66" rx="5" ry="7" fill="#1a1a1a"/><path d="M6.0 4.0H27.0" stroke="#202020" stroke-width="0.6400000000000001" stroke-dasharray="2 0.5" opacity="0.55"/><path d="M6.0 6.5H34.0" stroke="#202020" stroke-width="0.6400000000000001" stroke-dasharray="2 0.5" opacity="0.55"/><path d="M6.0 9.0H41.0" stroke="#202020" stroke-width="0.6400000000000001" stroke-dasharray="2 0.5" opacity="0.55"/></svg>
<div class="t sx" style="left:136.00px;top:443.87px;font-size:9.6px;color:#4e4e4e;transform:scaleX(0.9468);-webkit-text-stroke:0;letter-spacing:1px;">900x789</div>
<div class="t sx" style="left:215.00px;top:443.87px;font-size:9.6px;color:#4e4e4e;transform:scaleX(0.8075);-webkit-text-stroke:0;letter-spacing:1px;">JPG</div>
<div class="a" style="left:247px;top:352px;width:118px;height:107px;border:4px solid #2f66c6;border-radius:4px"></div>
<svg style="left:253.3px;top:377.0px;overflow:hidden;" width="107" height="47" viewBox="0 0 341 149"><defs><linearGradient id="tbl" x1="0" y1="0" x2="1" y2="0.4"><stop offset="0" stop-color="#a6b8ca"/><stop offset="0.55" stop-color="#b4c0cc"/><stop offset="1" stop-color="#c0c8d0"/></linearGradient><linearGradient id="lcd" x1="0" y1="0" x2="0" y2="1"><stop offset="0" stop-color="#9aae64"/><stop offset="1" stop-color="#88a058"/></linearGradient></defs><rect width="341" height="149" fill="url(#tbl)"/><path d="M0 28H80M0 58H60M0 88H55M0 112H90M45 20L25 149M95 40L80 149" stroke="#c0ccd8" stroke-width="3" fill="none" opacity="0.35"/><path d="M85 0H280L341 30V62L330 58L250 22L200 25L100 40L85 40Z" fill="#d4c6bc"/><path d="M190 0H215V25H190Z" fill="#b8c2cc" opacity="0.6"/><path d="M280 0H341V29Z" fill="#eec862"/><path d="M279 0L341 30" stroke="#f2f2f0" stroke-width="2"/><path d="M0 0H50L59 22L20 24H0Z" fill="#e8ecf2"/><path d="M50 1Q65 8 80 2" stroke="#9aa0a8" stroke-width="2" fill="none"/><path d="M60 36L74 38" stroke="#1a2a6a" stroke-width="2.5"/><path d="M74 38Q100 30 115 12Q135 0 145 4Q150 10 135 40" stroke="#181818" stroke-width="1.4" fill="none"/><path d="M74 39Q105 35 118 14Q138 5 147 8Q152 15 140 40M78 44Q90 45 95 50" stroke="#d83030" stroke-width="1.5" fill="none"/><path d="M110 40Q150 25 200 28Q230 30 250 20M150 30Q170 8 190 15Q200 20 215 12L240 5Q258 2 262 20" stroke="#1a1a1a" stroke-width="1.6" fill="none"/><path d="M145 40Q170 25 205 22L245 12Q255 10 265 20M210 25Q230 28 245 24" stroke="#d82828" stroke-width="1.6" fill="none"/><rect x="193" y="12" width="24" height="14" rx="2" fill="#202020"/><path d="M113 15L125 10" stroke="#f0f0f0" stroke-width="3"/><path d="M218 95H336L341 120L320 145H230Z" fill="#b4c0cc" opacity="0.7"/><rect x="262" y="108" width="24" height="12" fill="#c6d0da" opacity="0.8"/><path d="M202 20H229L247 55H213L202 45Z" fill="#43352c"/><rect x="217" y="37" width="15" height="13" fill="#e0c850" transform="rotate(-4 224 43)"/><path d="M229 20H274L305 55H247Z" fill="#4a4038"/><path d="M231.0 21L247.0 55" stroke="#0c0c0c" stroke-width="2.1"/><path d="M234.2 21L251.5 55" stroke="#0c0c0c" stroke-width="2.1"/><path d="M237.5 21L255.9 55" stroke="#0c0c0c" stroke-width="2.1"/><path d="M240.7 21L260.4 55" stroke="#0c0c0c" stroke-width="2.1"/><path d="M243.9 21L264.8 55" stroke="#0c0c0c" stroke-width="2.1"/><path d="M247.2 21L269.3 55" stroke="#0c0c0c" stroke-width="2.1"/><path d="M250.4 21L273.8 55" stroke="#0c0c0c" stroke-width="2.1"/><path d="M253.6 21L278.2 55" stroke="#0c0c0c" stroke-width="2.1"/><path d="M256.8 21L282.7 55" stroke="#0c0c0c" stroke-width="2.1"/><path d="M260.1 21L287.2 55" stroke="#0c0c0c" stroke-width="2.1"/><path d="M263.3 21L291.6 55" stroke="#0c0c0c" stroke-width="2.1"/><path d="M266.5 21L296.1 55" stroke="#0c0c0c" stroke-width="2.1"/><path d="M269.8 21L300.5 55" stroke="#0c0c0c" stroke-width="2.1"/><path d="M273.0 21L305.0 55" stroke="#0c0c0c" stroke-width="2.1"/><path d="M274 21L335 55H305Z" fill="#5a4838"/><path d="M212 55H336Q340 58 338 62L335 92H214Z" fill="#1a1817"/><circle cx="230" cy="64" r="8" fill="#0c0c0c" stroke="#2a2a2a" stroke-width="1"/><rect x="251" y="61" width="10" height="3" fill="#a88030" opacity="0.8"/><circle cx="251" cy="69" r="1.6" fill="#a0f060"/><circle cx="259" cy="69" r="1.6" fill="#a0f060"/><rect x="268" y="65" width="36" height="19" fill="#d6d2bc"/><path d="M272 72Q286 67 300 72" stroke="#6a6a60" stroke-width="0.8" fill="none"/><rect x="221" y="78" width="32" height="9" fill="#2a2828"/><rect x="222" y="81" width="5" height="5" fill="#e03030"/><rect x="230" y="81" width="5" height="5" fill="#4a4a4a"/><rect x="238" y="81" width="5" height="5" fill="#4a4a4a"/><rect x="246" y="81" width="5" height="5" fill="#e03030"/><path d="M270 88H303" stroke="#6a5a40" stroke-width="2"/><rect x="309" y="76" width="8" height="11" fill="#2a2a2a" stroke="#505050" stroke-width="0.8"/><rect x="319" y="76" width="8" height="11" fill="#2a2a2a" stroke="#505050" stroke-width="0.8"/><circle cx="321" cy="63" r="5.5" fill="#0a0a0a" stroke="#303030"/><path d="M25 116Q40 100 62 82" stroke="#141414" stroke-width="2.2" fill="none"/><path d="M59 71L100 40H216L220 71Z" fill="#725c4c"/><rect x="88.0" y="57.0" width="1.3" height="4" fill="#4a3a30"/><rect x="92.2" y="57.0" width="1.3" height="4" fill="#4a3a30"/><rect x="96.4" y="57.0" width="1.3" height="4" fill="#4a3a30"/><rect x="100.6" y="57.0" width="1.3" height="4" fill="#4a3a30"/><rect x="104.8" y="57.0" width="1.3" height="4" fill="#4a3a30"/><rect x="109.0" y="57.0" width="1.3" height="4" fill="#4a3a30"/><rect x="113.2" y="57.0" width="1.3" height="4" fill="#4a3a30"/><rect x="117.4" y="57.0" width="1.3" height="4" fill="#4a3a30"/><rect x="121.6" y="57.0" width="1.3" height="4" fill="#4a3a30"/><rect x="125.8" y="57.0" width="1.3" height="4" fill="#4a3a30"/><rect x="130.0" y="57.0" width="1.3" height="4" fill="#4a3a30"/><rect x="134.2" y="57.0" width="1.3" height="4" fill="#4a3a30"/><rect x="138.4" y="57.0" width="1.3" height="4" fill="#4a3a30"/><rect x="142.6" y="57.0" width="1.3" height="4" fill="#4a3a30"/><rect x="146.8" y="57.0" width="1.3" height="4" fill="#4a3a30"/><rect x="151.0" y="57.0" width="1.3" height="4" fill="#4a3a30"/><rect x="156.0" y="55.0" width="1.3" height="5" fill="#4a3a30"/><rect x="160.2" y="55.0" width="1.3" height="5" fill="#4a3a30"/><rect x="164.4" y="55.0" width="1.3" height="5" fill="#4a3a30"/><rect x="168.6" y="55.0" width="1.3" height="5" fill="#4a3a30"/><rect x="172.8" y="55.0" width="1.3" height="5" fill="#4a3a30"/><rect x="177.0" y="55.0" width="1.3" height="5" fill="#4a3a30"/><rect x="181.2" y="55.0" width="1.3" height="5" fill="#4a3a30"/><rect x="185.4" y="55.0" width="1.3" height="5" fill="#4a3a30"/><rect x="189.6" y="55.0" width="1.3" height="5" fill="#4a3a30"/><path d="M59 71L100 40" stroke="#5a4a3e" stroke-width="1.5"/><rect x="58" y="70" width="162" height="51" rx="4" fill="#2e3036"/><rect x="59" y="71" width="160" height="2.5" fill="#4a4c52"/><rect x="60" y="81" width="12" height="5" rx="1" fill="#4a80c8"/><rect x="61" y="90" width="10" height="3" fill="#3a3c42"/><rect x="61" y="97" width="10" height="3" fill="#3a3c42"/><circle cx="67" cy="113" r="3" fill="#111"/><circle cx="84" cy="86" r="6.5" fill="#111"/><circle cx="84" cy="116" r="6" fill="#111"/><rect x="78" y="96" width="12" height="8" fill="#222"/><rect x="95" y="75" width="67" height="37" rx="2" fill="#1e2024"/><rect x="98" y="77" width="61" height="32" fill="url(#lcd)"/><text x="153" y="92" font-family="Liberation Sans" font-style="italic" font-size="12" fill="#2a3418" text-anchor="end" textLength="44" lengthAdjust="spacingAndGlyphs">14.176.00</text><path d="M101 97H120M128 96H152M101 104H112M118 104H128M138 104H155" stroke="#3a4a22" stroke-width="1.8"/><path d="M101 116H110M114 116H126M130 116H142M146 116H156" stroke="#707278" stroke-width="2.5"/><rect x="164" y="76" width="7" height="5" rx="1" fill="#b8bcc4"/><rect x="164" y="84" width="6" height="3" fill="#80848a"/><rect x="164" y="100" width="7" height="4" fill="#9a9ea6"/><rect x="164" y="108" width="7" height="4" fill="#80848a"/><circle cx="195" cy="99" r="21" fill="#161616"/><circle cx="195" cy="99" r="19" fill="none" stroke="#2a2a2a" stroke-width="3" stroke-dasharray="1.5 1"/><circle cx="195" cy="100" r="14" fill="#1a1a1a"/><circle cx="199" cy="108" r="7" fill="#0a0a0a" stroke="#3a3a3a" stroke-width="2"/><rect x="96" y="121" width="90" height="11" fill="#6e747c"/><rect x="96" y="130" width="90" height="2" fill="#a8b0b8"/><path d="M189 122L187 149M192 122L190 149" stroke="#3a3a3a" stroke-width="1.5"/><path d="M0 118Q5 115 25 115Q40 116 42 124Q41 138 35 149H0Z" fill="#1e1e1e"/><path d="M2 121Q22 119 40 122M2 126Q22 124 39 127M2 131Q20 129 37 132" stroke="#4a4a4a" stroke-width="1"/><path d="M240 149Q290 138 341 133V149Z" fill="#eceef0"/><text x="338" y="143.5" font-family="Liberation Sans" font-weight="bold" font-size="7.6" fill="#111" text-anchor="end" textLength="188" lengthAdjust="spacingAndGlyphs">Fast Stone běží pod Win XP v Oracle VM Virtual Box pod Linuxem</text></svg>
<div class="t sx" style="left:259.00px;top:443.87px;font-size:9.6px;color:#4e4e4e;transform:scaleX(0.9468);-webkit-text-stroke:0;letter-spacing:1px;">900x394</div>
<div class="t sx" style="left:338.00px;top:443.87px;font-size:9.6px;color:#4e4e4e;transform:scaleX(0.8075);-webkit-text-stroke:0;letter-spacing:1px;">JPG</div>
</div>
<div class="track" style="left:894px;top:195px;width:15px;height:465px"></div>
<div class="sbtn" style="left:894px;top:195px;width:15px;height:15px"></div>
<svg style="left:898px;top:200px;" width="8" height="5" viewBox="0 0 8 5"><path d="M0 4.5H8L4 0.5Z" fill="#000"/></svg>
<div class="sbtn" style="left:894px;top:387px;width:15px;height:197px"></div>
<div class="sbtn" style="left:894px;top:645px;width:15px;height:15px"></div>
<svg style="left:898px;top:650px;" width="8" height="5" viewBox="0 0 8 5"><path d="M0 0.5H8L4 4.5Z" fill="#000"/></svg>
<div class="a" style="left:75px;top:661px;width:835px;height:1px;background:#fff"></div>
<div class="a" style="left:417px;top:663px;width:1px;height:15px;background:#a0a0a0"></div>
<div class="a" style="left:418px;top:663px;width:1px;height:15px;background:#fff"></div>
<div class="a" style="left:516px;top:663px;width:1px;height:15px;background:#a0a0a0"></div>
<div class="a" style="left:517px;top:663px;width:1px;height:15px;background:#fff"></div>
<div class="a" style="left:658px;top:663px;width:1px;height:15px;background:#a0a0a0"></div>
<div class="a" style="left:659px;top:663px;width:1px;height:15px;background:#fff"></div>
<div class="a" style="left:768px;top:663px;width:1px;height:15px;background:#a0a0a0"></div>
<div class="a" style="left:769px;top:663px;width:1px;height:15px;background:#fff"></div>
<div class="t sx" style="left:79.00px;top:666.69px;font-size:11px;color:#000;transform:scaleX(0.9510);">trx.jpg [ 19 / 21 ]</div>
<div class="t sx" style="left:451.00px;top:666.69px;font-size:11px;color:#000;transform:scaleX(0.8426);">2 složek</div>
<div class="t sx" style="left:540.50px;top:666.69px;font-size:11px;color:#000;transform:scaleX(0.8695);">21 souborů (2.39 MB)</div>
<div class="t sx" style="left:692.50px;top:666.69px;font-size:11px;color:#000;transform:scaleX(0.9006);">1 vybráno</div>
<svg style="left:900px;top:670px;" width="10" height="10" viewBox="0 0 10 10"><rect x="7" y="1" width="1.2" height="1.2" fill="#fff"/><rect x="7" y="1" width="1.2" height="1.2" fill="#707070"/><rect x="4" y="4" width="1.2" height="1.2" fill="#fff"/><rect x="4" y="4" width="1.2" height="1.2" fill="#707070"/><rect x="7" y="4" width="1.2" height="1.2" fill="#fff"/><rect x="7" y="4" width="1.2" height="1.2" fill="#707070"/><rect x="1" y="7" width="1.2" height="1.2" fill="#fff"/><rect x="1" y="7" width="1.2" height="1.2" fill="#707070"/><rect x="4" y="7" width="1.2" height="1.2" fill="#fff"/><rect x="4" y="7" width="1.2" height="1.2" fill="#707070"/><rect x="7" y="7" width="1.2" height="1.2" fill="#fff"/><rect x="7" y="7" width="1.2" height="1.2" fill="#707070"/></svg>
<div class="a" style="left:0px;top:786px;width:1024px;height:26px;background:#d4d0c8;border-top:1px solid #d4d0c8;box-shadow:inset 0 1px 0 #fff"></div>
<div class="a" style="left:1px;top:789px;width:46px;height:20px;background:#d4d0c8;box-shadow:inset 1px 1px 0 #fff,inset -1px -1px 0 #404040,inset -2px -2px 0 #808080"></div>
<svg style="left:3px;top:792px;" width="14" height="13" viewBox="0 0 14 13"><path d="M1 2Q4 0.5 6.5 2L5.8 6.2Q3 5 0.5 6.5Z" fill="#f05020"/><path d="M7.5 2.2Q10 3.5 13.5 2L12.8 6.5Q10 7.8 7 6.5Z" fill="#40c030"/><path d="M0.3 7.5Q3 6 5.6 7.2L5 11.5Q2.5 10.5 0 12Z" fill="#3070e8"/><path d="M6.8 7.5Q9.8 8.8 12.7 7.5L12 12Q9 13.5 6.2 12Z" fill="#f8c020"/></svg>
<div class="t sx" style="left:18.50px;top:793.69px;font-size:11px;color:#000;transform:scaleX(1.0175);font-weight:bold;">Start</div>
<div class="a" style="left:52px;top:789px;width:142px;height:20px;background-color:#eae8e2;background-image:linear-gradient(45deg,#fff 25%,transparent 25%,transparent 75%,#fff 75%),linear-gradient(45deg,#fff 25%,transparent 25%,transparent 75%,#fff 75%);background-size:2px 2px;background-position:0 0,1px 1px;box-shadow:inset 1px 1px 0 #404040,inset 2px 2px 0 #808080,inset -1px -1px 0 #fff"></div>
<svg style="left:56.5px;top:793px;" width="14" height="14" viewBox="0 0 14 14"><rect x="1" y="1" width="12" height="12" fill="#e04018"/><path d="M7 0L14 7L7 14L0 7Z" fill="#f0d8a8" stroke="#c8a060" stroke-width="0.6"/><ellipse cx="7" cy="7" rx="4" ry="2.8" fill="#fff"/><circle cx="7" cy="7" r="2.1" fill="#2a6ae8"/><circle cx="7" cy="7" r="0.9" fill="#000"/></svg>
<div class="t sx" style="left:73.50px;top:794.19px;font-size:11px;color:#000;transform:scaleX(0.9665);white-space:pre;font-weight:bold;">trx.jpg  -  FastStone I...</div>
<div class="a" style="left:933px;top:790px;width:86px;height:21px;background:#d4d0c8;box-shadow:inset 1px 1px 0 #808080,inset -1px -1px 0 #fff"></div>
<svg style="left:937px;top:793px;" width="13" height="15" viewBox="0 0 13 15"><circle cx="3" cy="11" r="2" fill="none" stroke="#909090" stroke-width="1.2"/><path d="M3 9L6 2" stroke="#a0a0a0" stroke-width="1.5"/><circle cx="7" cy="4" r="2.5" fill="none" stroke="#e8b820" stroke-width="1.8"/><path d="M8 6L12 13M10 9L12 8M11 11L13 10" stroke="#e8b820" stroke-width="1.8"/></svg>
<svg style="left:953px;top:793px;" width="12" height="14" viewBox="0 0 12 14"><path d="M6 0.5L11.5 2.5V7Q11.5 11.5 6 13.5Q0.5 11.5 0.5 7V2.5Z" fill="#d02828" stroke="#4060b0" stroke-width="1"/><path d="M3.8 4.5L8.2 9M8.2 4.5L3.8 9" stroke="#fff" stroke-width="1.5"/></svg>
<svg style="left:968px;top:793px;" width="14" height="15" viewBox="0 0 14 15"><circle cx="6" cy="6.5" r="5.5" fill="#707070" stroke="#404040" stroke-width="0.8"/><circle cx="6" cy="6.5" r="2.5" fill="#c0c0c0"/><path d="M8 13L13 8" stroke="#a8a8f8" stroke-width="1.5"/></svg>
<div class="t sx" style="left:988.50px;top:794.69px;font-size:11px;color:#000;transform:scaleX(0.8901);">14:28</div>
<div class="a" style="left:1021px;top:786px;width:3px;height:26px;background:#c8c8c8"></div>
<div class="a" style="left:0px;top:812px;width:1024px;height:22px;background:#dadada;border-bottom:1px solid #b8b8b8"></div>
<svg style="left:765px;top:815px;" width="13" height="14" viewBox="0 0 13 14"><rect x="0.5" y="0.5" width="12" height="13" rx="1.5" fill="#3a8ae0" stroke="#1a5ab0"/><path d="M3 11Q2 3 7 2.5Q11 3 10 7Q9 9 6.5 8.5M5 10Q4.5 5 7 5Q8.5 5.5 7.5 7" stroke="#fff" stroke-width="1.2" fill="none"/></svg>
<svg style="left:783px;top:815px;" width="14" height="14" viewBox="0 0 14 14"><circle cx="7" cy="7" r="6.3" fill="#e8e8e8" stroke="#b0b0b0" stroke-width="1"/><circle cx="7" cy="7" r="2.2" fill="none" stroke="#b8b8b8" stroke-width="1.2"/></svg>
<svg style="left:802px;top:815px;" width="15" height="14" viewBox="0 0 15 14"><rect x="6" y="0.5" width="8.5" height="7" fill="#3a8ae0" stroke="#1a3a80"/><rect x="0.5" y="5.5" width="8.5" height="7" fill="#3a8ae0" stroke="#1a3a80"/><rect x="2" y="7" width="5.5" height="4" fill="#8ac8ff"/></svg>
<svg style="left:820.5px;top:815px;" width="15" height="15" viewBox="0 0 15 15"><path d="M2 13L1 14M3 12L10 5L12 3Q14 1 13.5 3L11 6L4 13Z" fill="#60a8f0" stroke="#2060b0" stroke-width="0.9"/><path d="M10 2L13 5" stroke="#fff" stroke-width="1.5"/></svg>
<svg style="left:838.5px;top:815px;" width="15" height="14" viewBox="0 0 15 14"><path d="M0.5 2.5H5.5L7 4H14.5V13.5H0.5Z" fill="#50a8f0" stroke="#1a60b0"/><path d="M1 6H14" stroke="#a8d8ff" stroke-width="1.2"/></svg>
<svg style="left:858px;top:815px;" width="14" height="14" viewBox="0 0 14 14"><rect x="0.5" y="0.5" width="13" height="10" fill="#2a8ae8" stroke="#1a4a90"/><rect x="1.5" y="1.5" width="11" height="7" fill="#4aa8ff"/><path d="M2 12.5H12" stroke="#606060" stroke-width="2"/></svg>
<svg style="left:876px;top:815px;" width="14" height="14" viewBox="0 0 14 14"><rect x="5.5" y="0.5" width="8" height="8" fill="#7ab0f0" stroke="#2a60b0"/><rect x="0.5" y="5.5" width="8" height="8" fill="#2a80e0" stroke="#1a4a90"/></svg>
<svg style="left:895.5px;top:815px;" width="13" height="14" viewBox="0 0 13 14"><rect x="0.5" y="0.5" width="12" height="13" rx="2" fill="#d8d8d8" stroke="#a8a8a8"/><path d="M4 3.5V8.5Q4 10.5 6.5 10.5Q9 10.5 9 8.5V3.5" stroke="#909090" stroke-width="1.3" fill="none"/></svg>
<svg style="left:913.5px;top:815px;" width="15" height="15" viewBox="0 0 15 15"><circle cx="6.5" cy="7.5" r="6" fill="#4a9ae8" stroke="#1a5ab0"/><path d="M2 5Q5 3 6 7Q4 10 2 9" fill="#c8e8ff"/><path d="M7 8.5H10V6L14 10L10 14V11.5H7Z" fill="#30c030" stroke="#107010" stroke-width="0.6"/></svg>
<svg style="left:932px;top:815px;" width="14" height="14" viewBox="0 0 14 14"><rect x="0.5" y="0.5" width="13" height="13" fill="#fff" stroke="#2a70d0" stroke-width="1.2"/><path d="M5 2.5H9V6.5H11.5L7 11L2.5 6.5H5Z" fill="#30c030" stroke="#107010" stroke-width="0.6"/></svg>
<div class="t sx" style="left:951.50px;top:816.92px;font-size:12.5px;color:#3a3a3a;transform:scaleX(0.8567);">Pravý Ctrl</div>
</body></html>
